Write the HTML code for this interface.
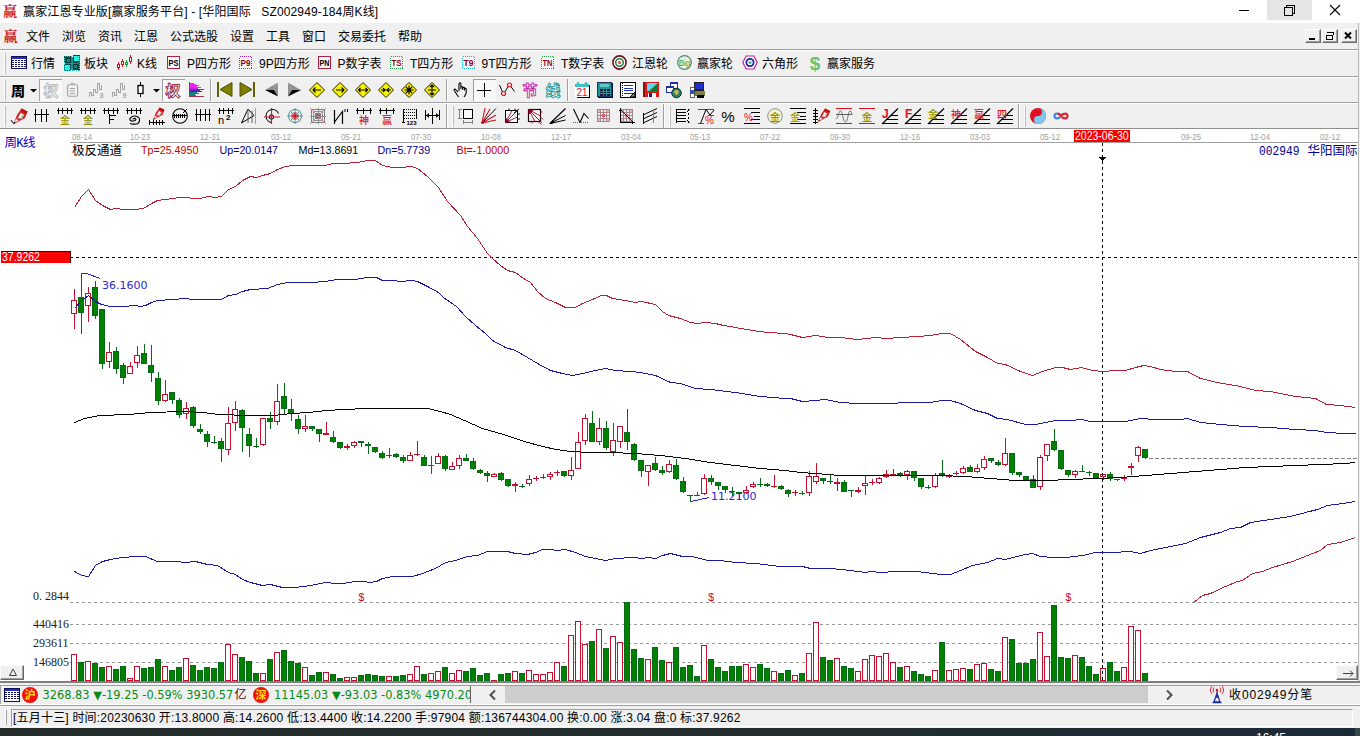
<!DOCTYPE html>
<html lang="zh"><head><meta charset="utf-8"><title>赢家江恩专业版</title>
<style>
html,body{margin:0;padding:0}
body{width:1360px;height:736px;position:relative;overflow:hidden;background:#f0f0f0;font-family:"Liberation Sans","Noto Sans CJK SC",sans-serif}
.t{position:absolute;white-space:nowrap}
.b{position:absolute}
svg{position:absolute;overflow:visible}
.ic{position:absolute}
</style></head><body>

<div class="b" style="left:0px;top:0px;width:1360px;height:23px;background:#fff;"></div>
<div class="b" style="left:1267px;top:0px;width:45px;height:20px;background:#e5e5e5;"></div>
<div class="t" style="left:3px;top:3px;font:700 14px/18px 'Liberation Serif','Noto Serif CJK SC',serif;color:#cc1020">赢</div>
<div class="t" style="left:23px;top:2.5px;font:400 12px/18px 'Liberation Sans','Noto Sans CJK SC',sans-serif;color:#000;letter-spacing:0.14px;">赢家江恩专业版[赢家服务平台] - [华阳国际&nbsp;&nbsp;&nbsp;SZ002949-184周K线]</div>
<svg style="left:1230px;top:0" width="130" height="23" shape-rendering="crispEdges"><path d="M9 10.5h10" stroke="#000" fill="none"/><path d="M54.5 7.5h8v8h-8z M56.500 7.5v-2h8v8h-2" stroke="#000" fill="none"/><path d="M100 5l10 10M110 5l-10 10" stroke="#000" fill="none" shape-rendering="geometricPrecision" stroke-width="1.1"/></svg>
<div class="b" style="left:0px;top:23px;width:1360px;height:26px;background:#f0f0f0;"></div>
<div class="t" style="left:3.5px;top:27.5px;font:700 14px/18px 'Liberation Serif','Noto Serif CJK SC',serif;color:#cc1020">赢</div>
<div class="t" style="left:26px;top:27.5px;font:400 12px/18px 'Liberation Sans','Noto Sans CJK SC',sans-serif;color:#000;">文件</div>
<div class="t" style="left:62px;top:27.5px;font:400 12px/18px 'Liberation Sans','Noto Sans CJK SC',sans-serif;color:#000;">浏览</div>
<div class="t" style="left:98px;top:27.5px;font:400 12px/18px 'Liberation Sans','Noto Sans CJK SC',sans-serif;color:#000;">资讯</div>
<div class="t" style="left:134px;top:27.5px;font:400 12px/18px 'Liberation Sans','Noto Sans CJK SC',sans-serif;color:#000;">江恩</div>
<div class="t" style="left:170px;top:27.5px;font:400 12px/18px 'Liberation Sans','Noto Sans CJK SC',sans-serif;color:#000;">公式选股</div>
<div class="t" style="left:230px;top:27.5px;font:400 12px/18px 'Liberation Sans','Noto Sans CJK SC',sans-serif;color:#000;">设置</div>
<div class="t" style="left:266px;top:27.5px;font:400 12px/18px 'Liberation Sans','Noto Sans CJK SC',sans-serif;color:#000;">工具</div>
<div class="t" style="left:302px;top:27.5px;font:400 12px/18px 'Liberation Sans','Noto Sans CJK SC',sans-serif;color:#000;">窗口</div>
<div class="t" style="left:338px;top:27.5px;font:400 12px/18px 'Liberation Sans','Noto Sans CJK SC',sans-serif;color:#000;">交易委托</div>
<div class="t" style="left:398px;top:27.5px;font:400 12px/18px 'Liberation Sans','Noto Sans CJK SC',sans-serif;color:#000;">帮助</div>
<div class="b" style="left:1305px;top:29px;width:14px;height:12px;background:#f0f0f0;border:1px solid;border-color:#fff #696969 #696969 #fff;box-shadow:inset -1px -1px 0 #a0a0a0"></div>
<div class="b" style="left:1322px;top:29px;width:14px;height:12px;background:#f0f0f0;border:1px solid;border-color:#fff #696969 #696969 #fff;box-shadow:inset -1px -1px 0 #a0a0a0"></div>
<div class="b" style="left:1341px;top:29px;width:14px;height:12px;background:#f0f0f0;border:1px solid;border-color:#fff #696969 #696969 #fff;box-shadow:inset -1px -1px 0 #a0a0a0"></div>
<svg style="left:1305px;top:29px" width="54" height="14" shape-rendering="crispEdges"><rect x="4" y="9" width="6" height="2" fill="#000"/><path d="M23.5 3h5v3M22 3.500h7M21.500 6.500h6v4h-6z M21 6.500h7" stroke="#000" fill="none"/><path d="M40 3.500l6 6M46 3.500l-6 6" stroke="#000" stroke-width="2" fill="none" shape-rendering="geometricPrecision"/></svg>
<div class="b" style="left:0px;top:49px;width:1359px;height:1px;background:#a0a0a0;"></div>
<div class="b" style="left:0px;top:50px;width:1359px;height:1px;background:#fff;"></div>
<div class="b" style="left:0px;top:76px;width:1359px;height:1px;background:#a0a0a0;"></div>
<div class="b" style="left:0px;top:77px;width:1359px;height:1px;background:#fff;"></div>
<div class="b" style="left:0px;top:102px;width:1359px;height:1px;background:#a0a0a0;"></div>
<div class="b" style="left:0px;top:103px;width:1359px;height:1px;background:#fff;"></div>
<div class="b" style="left:0px;top:128px;width:1359px;height:1px;background:#909090;"></div>
<div class="b" style="left:1358px;top:23px;width:1px;height:660px;background:#b8b8b8;"></div>
<div class="b" style="left:4px;top:53px;width:1px;height:21px;background:#fff;"></div>
<div class="b" style="left:5px;top:53px;width:1px;height:21px;background:#bcbcbc;"></div>
<svg style="left:11px;top:56px" width="18" height="18" viewBox="0 0 18 18" shape-rendering="crispEdges"><rect x="0.5" y="0.5" width="15" height="12" fill="#fff" stroke="#101050"/><rect x="1" y="1" width="14" height="2" fill="#2030c0"/><path d="M1 4.5h14" stroke="#101050"/><path d="M1 6.5h14" stroke="#101050"/><path d="M1 8.5h14" stroke="#101050"/><path d="M1 10.5h14" stroke="#101050"/><path d="M3.5 3v9" stroke="#fff"/><path d="M6.5 3v9" stroke="#fff"/><path d="M9.5 3v9" stroke="#fff"/><path d="M12.5 3v9" stroke="#fff"/></svg>
<div class="t" style="left:31px;top:54.5px;font:400 12px/18px 'Liberation Sans','Noto Sans CJK SC',sans-serif;color:#000;">行情</div>
<svg style="left:64px;top:55px" width="18" height="18" viewBox="0 0 18 18" shape-rendering="crispEdges"><path d="M0 1h8v1h1V0h7v7h-1v1h1v7H8v-1H7v2H0V9h1V8H0z" fill="#0a4a4a"/><rect x="0.500" y="1.500" width="15" height="14" fill="none" stroke="#20c8c0" stroke-dasharray="1 1"/><rect x="7" y="2" width="2" height="13" fill="#18b0a8" opacity=".7"/><rect x="1" y="8" width="14" height="1" fill="#18b0a8" opacity=".7"/><rect x="2.500" y="3.500" width="4" height="4" fill="#108888" stroke="#063838"/><rect x="10" y="1" width="5" height="5" fill="#28f0e0"/><rect x="1" y="10" width="5" height="5" fill="#28f0e0"/><rect x="9.500" y="9.500" width="4" height="4" fill="#108888" stroke="#063838"/></svg>
<div class="t" style="left:84px;top:54.5px;font:400 12px/18px 'Liberation Sans','Noto Sans CJK SC',sans-serif;color:#000;">板块</div>
<svg style="left:116px;top:56px" width="18" height="18" viewBox="0 0 18 18" shape-rendering="crispEdges"><rect x="2" y="6" width="1" height="8" fill="#e01020"/><rect x="1.5" y="8.5" width="2" height="3" fill="#fff" stroke="#e01020"/><rect x="6" y="3" width="1" height="8" fill="#e01020"/><rect x="5.5" y="5.5" width="2" height="3" fill="#fff" stroke="#e01020"/><rect x="10" y="4" width="1" height="7" fill="#10a030"/><rect x="9.5" y="6.5" width="2" height="2" fill="#fff" stroke="#10a030"/><rect x="14" y="-1" width="1" height="9" fill="#e01020"/><rect x="13.5" y="1.5" width="2" height="4" fill="#fff" stroke="#e01020"/></svg>
<div class="t" style="left:137px;top:54.5px;font:400 12px/18px 'Liberation Sans','Noto Sans CJK SC',sans-serif;color:#000;">K线</div>
<svg style="left:167px;top:56px" width="18" height="18" viewBox="0 0 18 18" shape-rendering="crispEdges"><rect x="0.5" y="0.5" width="12" height="12" fill="#f8f8f8" stroke="#b02040"/><text x="6.500" y="10" font-family="'Liberation Sans',sans-serif" font-size="8.500" font-weight="700" fill="#000" text-anchor="middle" shape-rendering="auto" textLength="10" lengthAdjust="spacingAndGlyphs">PS</text></svg>
<div class="t" style="left:187px;top:54.5px;font:400 12px/18px 'Liberation Sans','Noto Sans CJK SC',sans-serif;color:#000;">P四方形</div>
<svg style="left:239px;top:56px" width="18" height="18" viewBox="0 0 18 18" shape-rendering="crispEdges"><rect x="0.5" y="0.5" width="12" height="12" fill="#f8f8f8" stroke="#a020c0" stroke-dasharray="1 1"/><text x="6.500" y="10" font-family="'Liberation Sans',sans-serif" font-size="8.500" font-weight="700" fill="#900010" text-anchor="middle" shape-rendering="auto" textLength="10" lengthAdjust="spacingAndGlyphs">P9</text></svg>
<div class="t" style="left:259px;top:54.5px;font:400 12px/18px 'Liberation Sans','Noto Sans CJK SC',sans-serif;color:#000;">9P四方形</div>
<svg style="left:318px;top:56px" width="18" height="18" viewBox="0 0 18 18" shape-rendering="crispEdges"><rect x="0.5" y="0.5" width="12" height="12" fill="#f8f8f8" stroke="#b02040"/><text x="6.500" y="10" font-family="'Liberation Sans',sans-serif" font-size="8.500" font-weight="700" fill="#000" text-anchor="middle" shape-rendering="auto" textLength="10" lengthAdjust="spacingAndGlyphs">PN</text></svg>
<div class="t" style="left:337.5px;top:54.5px;font:400 12px/18px 'Liberation Sans','Noto Sans CJK SC',sans-serif;color:#000;">P数字表</div>
<svg style="left:390px;top:56px" width="18" height="18" viewBox="0 0 18 18" shape-rendering="crispEdges"><rect x="0.5" y="0.5" width="12" height="12" fill="#f8f8f8" stroke="#20a040" stroke-dasharray="1 1"/><text x="6.500" y="10" font-family="'Liberation Sans',sans-serif" font-size="8.500" font-weight="700" fill="#900010" text-anchor="middle" shape-rendering="auto" textLength="10" lengthAdjust="spacingAndGlyphs">TS</text></svg>
<div class="t" style="left:410px;top:54.5px;font:400 12px/18px 'Liberation Sans','Noto Sans CJK SC',sans-serif;color:#000;">T四方形</div>
<svg style="left:462px;top:56px" width="18" height="18" viewBox="0 0 18 18" shape-rendering="crispEdges"><rect x="0.5" y="0.5" width="12" height="12" fill="#f8f8f8" stroke="#20c0c0" stroke-dasharray="1 1"/><text x="6.500" y="10" font-family="'Liberation Sans',sans-serif" font-size="8.500" font-weight="700" fill="#900010" text-anchor="middle" shape-rendering="auto" textLength="10" lengthAdjust="spacingAndGlyphs">T9</text></svg>
<div class="t" style="left:481.5px;top:54.5px;font:400 12px/18px 'Liberation Sans','Noto Sans CJK SC',sans-serif;color:#000;">9T四方形</div>
<svg style="left:541px;top:56px" width="18" height="18" viewBox="0 0 18 18" shape-rendering="crispEdges"><rect x="0.5" y="0.5" width="12" height="12" fill="#f8f8f8" stroke="#20a040" stroke-dasharray="1 1"/><text x="6.500" y="10" font-family="'Liberation Sans',sans-serif" font-size="8.500" font-weight="700" fill="#900010" text-anchor="middle" shape-rendering="auto" textLength="10" lengthAdjust="spacingAndGlyphs">TN</text></svg>
<div class="t" style="left:561px;top:54.5px;font:400 12px/18px 'Liberation Sans','Noto Sans CJK SC',sans-serif;color:#000;">T数字表</div>
<svg style="left:612px;top:55px" width="18" height="18" viewBox="0 0 18 18" shape-rendering="crispEdges"><g shape-rendering="geometricPrecision"><circle cx="7.500" cy="7.500" r="6.600" fill="#fff" stroke="#701020" stroke-width="1.6"/><circle cx="7.500" cy="7.500" r="3.800" fill="#fff" stroke="#208040" stroke-width="1.500"/><circle cx="7.500" cy="7.500" r="1.500" fill="#e04040"/></g></svg>
<div class="t" style="left:632px;top:54.5px;font:400 12px/18px 'Liberation Sans','Noto Sans CJK SC',sans-serif;color:#000;">江恩轮</div>
<svg style="left:677px;top:55px" width="18" height="18" viewBox="0 0 18 18" shape-rendering="crispEdges"><g shape-rendering="geometricPrecision"><circle cx="7.500" cy="7.500" r="6.800" fill="#e8f4e8" stroke="#508878" stroke-width="1.2"/><text x="7.500" y="10.500" font-family="'Liberation Sans',sans-serif" font-size="9.500" font-weight="400" fill="#30a030" text-anchor="middle" textLength="11.500" lengthAdjust="spacingAndGlyphs">Big</text></g></svg>
<div class="t" style="left:697px;top:54.5px;font:400 12px/18px 'Liberation Sans','Noto Sans CJK SC',sans-serif;color:#000;">赢家轮</div>
<svg style="left:742px;top:55px" width="18" height="18" viewBox="0 0 18 18" shape-rendering="crispEdges"><g shape-rendering="geometricPrecision"><path d="M0.800 7.500L4.200 1h7.600L15.200 7.500 11.800 14H4.200z" fill="#fff" stroke="#c020a0" stroke-width="1.2"/><circle cx="8" cy="7.500" r="3.600" fill="#fff" stroke="#2020a0" stroke-width="1.800"/><circle cx="8" cy="7.500" r="1.600" fill="#40c080"/></g></svg>
<div class="t" style="left:762px;top:54.5px;font:400 12px/18px 'Liberation Sans','Noto Sans CJK SC',sans-serif;color:#000;">六角形</div>
<svg style="left:807px;top:55px" width="18" height="18" viewBox="0 0 18 18" shape-rendering="crispEdges"><text x="8" y="15" font-family="'Liberation Sans',sans-serif" font-size="19" font-weight="700" fill="#6cc06c" text-anchor="middle" shape-rendering="auto">$</text></svg>
<div class="t" style="left:827px;top:54.5px;font:400 12px/18px 'Liberation Sans','Noto Sans CJK SC',sans-serif;color:#000;">赢家服务</div>
<div class="b" style="left:4px;top:80px;width:1px;height:21px;background:#fff;"></div>
<div class="b" style="left:5px;top:80px;width:1px;height:21px;background:#bcbcbc;"></div>
<svg style="left:11px;top:83px" width="16" height="16" viewBox="0 0 16 16" shape-rendering="crispEdges"><text x="7" y="12.500" font-family="'Liberation Sans','Noto Sans CJK SC',sans-serif" font-size="14" font-weight="900" fill="#000" text-anchor="middle" shape-rendering="auto">周</text></svg>
<svg style="left:30px;top:89px" width="8" height="5" viewBox="0 0 8 5" shape-rendering="crispEdges"><path d="M0 0h7L3.500 3.500z" fill="#000" shape-rendering="geometricPrecision"/></svg>
<div class="b" style="left:39px;top:79px;width:23px;height:22px;background:#f8f8f8;border-left:1px solid #a0a0a0;border-top:1px solid #a0a0a0;box-sizing:border-box"></div>
<svg style="left:43px;top:82px" width="16" height="16" viewBox="0 0 16 16" shape-rendering="crispEdges"><text x="8" y="13.500" font-family="'Liberation Sans','Noto Sans CJK SC',sans-serif" font-size="15" font-weight="700" fill="#fbfbfb" stroke="#b0b0b0" stroke-width="0.8" text-anchor="middle" shape-rendering="auto">权</text></svg>
<svg style="left:67px;top:83px" width="12" height="15" viewBox="0 0 12 15" shape-rendering="crispEdges"><g shape-rendering="geometricPrecision" fill="none" stroke="#a4a4a4" stroke-width="1.100"><rect x="0.600" y="1.800" width="10" height="11.500" rx="1.500"/><path d="M3.500 1.500c0-1.300 4-1.300 4 0" /><path d="M3 5.500h5M3 8h5M3 10.500h5"/></g></svg>
<svg style="left:88px;top:82px" width="17" height="17" viewBox="0 0 17 17" shape-rendering="crispEdges"><path d="M1.500 15V10.500H3.500V13.500H5.500V7.500H7.500V10.500H9.500V1.500H11.500V7.500H13.500V3" fill="none" stroke="#a4a4a4" shape-rendering="crispEdges"/><text x="13.500" y="16" font-family="'Liberation Sans',sans-serif" font-size="7" font-weight="700" fill="#a4a4a4" text-anchor="middle" shape-rendering="auto">3</text></svg>
<svg style="left:111px;top:82px" width="17" height="17" viewBox="0 0 17 17" shape-rendering="crispEdges"><path d="M1.500 15V10.500H3.500V13.500H5.500V7.500H7.500V10.500H9.500V1.500H11.500V7.500H13.500V3" fill="none" stroke="#a4a4a4" shape-rendering="crispEdges"/><text x="13.500" y="16" font-family="'Liberation Sans',sans-serif" font-size="7" font-weight="700" fill="#a4a4a4" text-anchor="middle" shape-rendering="auto">9</text></svg>
<svg style="left:137px;top:82px" width="8" height="16" viewBox="0 0 8 16" shape-rendering="crispEdges"><rect x="3" y="0" width="1" height="15" fill="#000"/><rect x="1" y="3.500" width="5" height="8" fill="#fff" stroke="#000" stroke-width="1.300" shape-rendering="geometricPrecision"/></svg>
<svg style="left:153px;top:89px" width="8" height="5" viewBox="0 0 8 5" shape-rendering="crispEdges"><path d="M0 0h7L3.500 3.500z" fill="#000" shape-rendering="geometricPrecision"/></svg>
<div class="b" style="left:162px;top:79px;width:23px;height:22px;background:#f8f8f8;border-left:1px solid #a0a0a0;border-top:1px solid #a0a0a0;box-sizing:border-box"></div>
<svg style="left:165px;top:82px" width="16" height="16" viewBox="0 0 16 16" shape-rendering="crispEdges"><text x="8" y="13.500" font-family="'Liberation Sans','Noto Sans CJK SC',sans-serif" font-size="15" font-weight="700" fill="#fbfbfb" stroke="#901020" stroke-width="0.8" text-anchor="middle" shape-rendering="auto">权</text></svg>
<svg style="left:188px;top:82px" width="17" height="16" viewBox="0 0 17 16" shape-rendering="crispEdges"><path d="M1.500 0v14.500h14" fill="none" stroke="#a03050" stroke-width="1"/><rect x="2" y="0.5" width="4" height="1" fill="#f020f0"/><rect x="2" y="1.5" width="6" height="1" fill="#f020f0"/><rect x="2" y="2.5" width="9" height="1" fill="#f020f0"/><rect x="2" y="3.5" width="7" height="1" fill="#f020f0"/><rect x="2" y="4.5" width="11" height="1" fill="#f020f0"/><rect x="2" y="5.5" width="8" height="1" fill="#d020e0"/><rect x="2" y="6.5" width="14" height="1" fill="#9020c0"/><rect x="2" y="7.5" width="10" height="1" fill="#6020b0"/><rect x="2" y="8.5" width="12" height="1" fill="#204090"/><rect x="2" y="9.5" width="7" height="1" fill="#108080"/><rect x="2" y="10.5" width="9" height="1" fill="#108080"/><rect x="2" y="11.5" width="5" height="1" fill="#108080"/><rect x="2" y="12.5" width="6" height="1" fill="#108080"/></svg>
<div class="b" style="left:210px;top:79px;width:1px;height:22px;background:#a0a0a0;"></div>
<div class="b" style="left:211px;top:79px;width:1px;height:22px;background:#fff;"></div>
<svg style="left:217px;top:82px" width="16" height="16" viewBox="0 0 16 16" shape-rendering="crispEdges"><rect x="0" y="0" width="2" height="15" fill="#606000"/><path d="M15 0.500L3 7.500 15 14.500z" fill="#808000" stroke="#505000" shape-rendering="geometricPrecision"/></svg>
<svg style="left:240px;top:82px" width="16" height="16" viewBox="0 0 16 16" shape-rendering="crispEdges"><rect x="13" y="0" width="2" height="15" fill="#606000"/><path d="M0 0.500L12 7.500 0 14.500z" fill="#808000" stroke="#505000" shape-rendering="geometricPrecision"/></svg>
<svg style="left:264px;top:82px" width="16" height="16" viewBox="0 0 16 16" shape-rendering="crispEdges"><g shape-rendering="geometricPrecision"><path d="M14 0.500L1 8 14 8z" fill="#f4f4f4"/><path d="M14 0.500L1 8h9z" fill="#909090"/><path d="M14 0.500v14l-4-6.500z" fill="#909090"/><path d="M1 8l13 6.500L10 8z" fill="#000"/></g></svg>
<svg style="left:287px;top:82px" width="16" height="16" viewBox="0 0 16 16" shape-rendering="crispEdges"><g shape-rendering="geometricPrecision"><path d="M1 0.500L14 8H5z" fill="#909090"/><path d="M1 0.500v14l4-6.500z" fill="#909090"/><path d="M14 8L1 14.500 5 8z" fill="#000"/></g></svg>
<svg style="left:308.5px;top:81.5px" width="16" height="16" viewBox="0 0 16 16" shape-rendering="crispEdges"><g shape-rendering="geometricPrecision"><path d="M8 0.500L15.500 8 8 15.500 0.500 8z" fill="#f6f200" stroke="#282000" stroke-width="1"/><path d="M12 8H4M6.500 5.500L4 8l2.500 2.500" stroke="#000" stroke-width="1.100" fill="none"/></g></svg>
<svg style="left:331.5px;top:81.5px" width="16" height="16" viewBox="0 0 16 16" shape-rendering="crispEdges"><g shape-rendering="geometricPrecision"><path d="M8 0.500L15.500 8 8 15.500 0.500 8z" fill="#f6f200" stroke="#282000" stroke-width="1"/><path d="M4 8h8M9.500 5.500L12 8 9.500 10.500" stroke="#000" stroke-width="1.100" fill="none"/></g></svg>
<svg style="left:354.5px;top:81.5px" width="16" height="16" viewBox="0 0 16 16" shape-rendering="crispEdges"><g shape-rendering="geometricPrecision"><path d="M8 0.500L15.500 8 8 15.500 0.500 8z" fill="#f6f200" stroke="#282000" stroke-width="1"/><path d="M3.500 8h9M5.500 6L3.500 8l2 2M10.500 6l2 2-2 2" stroke="#000" stroke-width="1.100" fill="none"/></g></svg>
<svg style="left:377.5px;top:81.5px" width="16" height="16" viewBox="0 0 16 16" shape-rendering="crispEdges"><g shape-rendering="geometricPrecision"><path d="M8 0.500L15.500 8 8 15.500 0.500 8z" fill="#f6f200" stroke="#282000" stroke-width="1"/><path d="M3 8h10M5 6l2 2-2 2M11 6L9 8l2 2" stroke="#000" stroke-width="1.100" fill="none"/></g></svg>
<svg style="left:400.5px;top:81.5px" width="16" height="16" viewBox="0 0 16 16" shape-rendering="crispEdges"><g shape-rendering="geometricPrecision"><path d="M8 0.500L15.500 8 8 15.500 0.500 8z" fill="#f6f200" stroke="#282000" stroke-width="1"/><path d="M3.500 8h9M8 3.500v9M5 5l6 6M11 5l-6 6" stroke="#000" stroke-width="1.100" fill="none"/></g></svg>
<svg style="left:423.5px;top:81.5px" width="16" height="16" viewBox="0 0 16 16" shape-rendering="crispEdges"><g shape-rendering="geometricPrecision"><path d="M8 0.500L15.500 8 8 15.500 0.500 8z" fill="#f6f200" stroke="#282000" stroke-width="1"/><path d="M4 8h8M8 3v10M6 5l2-2 2 2M6 11l2 2 2-2" stroke="#000" stroke-width="1.100" fill="none"/></g></svg>
<div class="b" style="left:446px;top:79px;width:1px;height:22px;background:#a0a0a0;"></div>
<div class="b" style="left:447px;top:79px;width:1px;height:22px;background:#fff;"></div>
<svg style="left:453px;top:82px" width="16" height="16" viewBox="0 0 16 16" shape-rendering="crispEdges"><g shape-rendering="geometricPrecision" fill="none" stroke="#000" stroke-width="1.100" stroke-linejoin="round"><path d="M5.500 15L1.200 8.500c-.6-1 .6-1.800 1.400-1l2.400 2.600M6 9V1.800c0-1.400 1.900-1.400 1.900 0V7M7.900 5.500c0-1.300 1.800-1.300 1.800 0V8M9.700 6.300c0-1.200 1.800-1.200 1.800 0V8.500M11.500 7.200c0-1.100 1.700-1.100 1.700 0v3.300c0 1.800-1.200 3-2.200 4.500"/></g></svg>
<div class="b" style="left:473px;top:79px;width:23px;height:22px;background:#f8f8f8;border-left:1px solid #a0a0a0;border-top:1px solid #a0a0a0;box-sizing:border-box"></div>
<svg style="left:477px;top:83px" width="15" height="15" viewBox="0 0 15 15" shape-rendering="crispEdges"><path d="M7.500 0v14M0 7.500h14" stroke="#000" stroke-width="1" fill="none"/></svg>
<svg style="left:499px;top:82px" width="16" height="16" viewBox="0 0 16 16" shape-rendering="crispEdges"><g shape-rendering="geometricPrecision" fill="none"><path d="M0.500 3l4 9 6-9.500 5 7" stroke="#000" stroke-width="1"/><circle cx="4.500" cy="11.500" r="2" stroke="#e01020" stroke-width="1.200" fill="#f0f0f0"/><circle cx="10.500" cy="3" r="2" stroke="#e01020" stroke-width="1.200" fill="#f0f0f0"/></g></svg>
<svg style="left:522px;top:82px" width="16" height="16" viewBox="0 0 16 16" shape-rendering="crispEdges"><text x="8" y="13.500" font-family="'Liberation Sans','Noto Sans CJK SC',sans-serif" font-size="15" font-weight="700" fill="#fbfbfb" stroke="#c010a0" stroke-width="0.8" text-anchor="middle" shape-rendering="auto">节</text></svg>
<svg style="left:545px;top:82px" width="16" height="16" viewBox="0 0 16 16" shape-rendering="crispEdges"><text x="8" y="13.500" font-family="'Liberation Sans','Noto Sans CJK SC',sans-serif" font-size="15" font-weight="700" fill="#fbfbfb" stroke="#109090" stroke-width="0.8" text-anchor="middle" shape-rendering="auto">线</text></svg>
<div class="b" style="left:567px;top:79px;width:1px;height:22px;background:#a0a0a0;"></div>
<div class="b" style="left:568px;top:79px;width:1px;height:22px;background:#fff;"></div>
<svg style="left:575px;top:82px" width="16" height="16" viewBox="0 0 16 16" shape-rendering="crispEdges"><rect x="2" y="3" width="13" height="13" fill="#000"/><rect x="0" y="2" width="14" height="13" fill="#fff"/><rect x="0" y="2" width="14" height="3" fill="#40c0c0"/><path d="M1.500 2.500L3 0l1.500 2.500M9.500 2.500L11 0l1.500 2.500" fill="#40c0c0" stroke="#40c0c0" shape-rendering="geometricPrecision"/><text x="7" y="14" font-family="'Liberation Sans',sans-serif" font-size="10.500" font-weight="400" fill="#e01030" text-anchor="middle" shape-rendering="auto" textLength="11" lengthAdjust="spacingAndGlyphs">21</text></svg>
<svg style="left:597px;top:82px" width="16" height="16" viewBox="0 0 16 16" shape-rendering="crispEdges"><rect x="1" y="1" width="15" height="15" fill="#001040"/><rect x="0" y="0" width="15" height="15" fill="#189898"/><rect x="0.500" y="0.500" width="14" height="14" fill="none" stroke="#203060"/><rect x="3" y="2" width="9" height="3" fill="#60c8c8"/><rect x="3" y="7" width="2.500" height="1.500" fill="#102040"/><rect x="6.5" y="7" width="2.500" height="1.500" fill="#102040"/><rect x="10" y="7" width="2.500" height="1.500" fill="#102040"/><rect x="3" y="9.5" width="2.500" height="1.500" fill="#102040"/><rect x="6.5" y="9.5" width="2.500" height="1.500" fill="#102040"/><rect x="10" y="9.5" width="2.500" height="1.500" fill="#102040"/><rect x="3" y="12" width="2.500" height="1.500" fill="#102040"/><rect x="6.5" y="12" width="2.500" height="1.500" fill="#102040"/><rect x="10" y="12" width="2.500" height="1.500" fill="#102040"/></svg>
<svg style="left:620px;top:82px" width="16" height="16" viewBox="0 0 16 16" shape-rendering="crispEdges"><rect x="0.500" y="0.500" width="15" height="15" fill="#fff" stroke="#000" stroke-width="1.500"/><path d="M4 3.5h9" stroke="#2030a0"/><path d="M4 6h9" stroke="#2030a0"/><path d="M4 8.5h9" stroke="#2030a0"/><path d="M4 11h9" stroke="#2030a0"/><path d="M2 1v14" stroke="#000" stroke-dasharray="1 1"/><path d="M10 15l5-5v5z" fill="#808080" stroke="#000" shape-rendering="geometricPrecision"/></svg>
<svg style="left:643px;top:82px" width="16" height="16" viewBox="0 0 16 16" shape-rendering="crispEdges"><rect x="0" y="0" width="16" height="15" fill="#e01818"/><rect x="0" y="0" width="2" height="15" fill="#901010"/><rect x="4" y="1" width="11" height="8" fill="#60d8e8"/><path d="M15 1v8H6z" fill="#187838" shape-rendering="geometricPrecision"/><rect x="5" y="11" width="8" height="4" fill="#fff"/><rect x="6" y="11" width="3" height="4" fill="#202080"/></svg>
<svg style="left:666px;top:82px" width="16" height="16" viewBox="0 0 16 16" shape-rendering="crispEdges"><rect x="4" y="0" width="8" height="7" fill="#2030a0"/><rect x="5" y="2" width="6" height="4" fill="#fff"/><rect x="0" y="4" width="8" height="7" fill="#2030a0"/><rect x="1" y="6" width="6" height="4" fill="#fff"/><g shape-rendering="geometricPrecision"><circle cx="10.500" cy="11" r="4.800" fill="#308070" stroke="#103030"/><path d="M8 9l3-1 2 2-2 3-2-1z" fill="#d0c040"/></g></svg>
<svg style="left:689px;top:82px" width="16" height="16" viewBox="0 0 16 16" shape-rendering="crispEdges"><rect x="5" y="0" width="10" height="9" fill="#202020"/><rect x="6" y="1" width="8" height="6" fill="#2030d0"/><rect x="4" y="9" width="12" height="5" fill="#808040"/><rect x="8" y="13" width="7" height="3" fill="#000"/><rect x="1" y="5" width="4" height="10" fill="#fff" stroke="#404040" stroke-width=".8"/><rect x="1" y="8" width="4" height="4" fill="#3050c0"/></svg>
<div class="b" style="left:4px;top:106px;width:1px;height:21px;background:#fff;"></div>
<div class="b" style="left:5px;top:106px;width:1px;height:21px;background:#bcbcbc;"></div>
<svg style="left:11px;top:108px" width="16" height="17" viewBox="0 0 16 17" shape-rendering="crispEdges"><g transform="translate(1,0) scale(1)" shape-rendering="geometricPrecision"><path d="M1.500 16L5 7 9.500 0.500 15.500 3.500 13 10 6.500 13.500z" fill="#e01818"/><path d="M5.500 10.500L8.500 4.500 12.500 6.500 10 11z" fill="#b8b8b8"/><path d="M6.500 9.500L9 5.500 10.500 6.200 8.500 10z" fill="#fff"/><path d="M1.500 16L4 10.500 7 12.500z" fill="#f4f4f4" stroke="#e01818" stroke-width=".5"/><path d="M1.500 16l.9-2.200 1.300.9z" fill="#000"/><path d="M9.500 0.500L15.500 3.500 14.500 6 8.500 2.500z" fill="#c01010"/></g><path d="M0 12l2.500 3.500" stroke="#000" fill="none" shape-rendering="geometricPrecision"/></svg>
<svg style="left:34px;top:108px" width="16" height="17" viewBox="0 0 16 17" shape-rendering="crispEdges"><path d="M1.500 1v13M7.500 1v13M12.500 1v13M0 6.500h15" stroke="#000" fill="none"/></svg>
<svg style="left:57px;top:108px" width="16" height="17" viewBox="0 0 16 17" shape-rendering="crispEdges"><path d="M0 2.5h16" stroke="#000" fill="none"/><path d="M1.5 0v6" stroke="#000" fill="none"/><path d="M5.5 0v6" stroke="#000" fill="none"/><path d="M10.5 0v6" stroke="#000" fill="none"/><path d="M14.5 0v6" stroke="#000" fill="none"/><text x="8" y="15.500" font-family="'Liberation Sans','Noto Sans CJK SC',sans-serif" font-size="10" font-weight="500" fill="#909000" text-anchor="middle" shape-rendering="auto">金</text></svg>
<svg style="left:80px;top:108px" width="16" height="17" viewBox="0 0 16 17" shape-rendering="crispEdges"><path d="M0 2.5h16" stroke="#000" fill="none"/><path d="M1.5 0v6" stroke="#000" fill="none"/><path d="M5.5 0v6" stroke="#000" fill="none"/><path d="M10.5 0v6" stroke="#000" fill="none"/><path d="M14.5 0v6" stroke="#000" fill="none"/><text x="8" y="15.500" font-family="'Liberation Sans','Noto Sans CJK SC',sans-serif" font-size="10" font-weight="500" fill="#909000" text-anchor="middle" shape-rendering="auto">金</text></svg>
<svg style="left:103px;top:108px" width="16" height="17" viewBox="0 0 16 17" shape-rendering="crispEdges"><path d="M0 2.5h16" stroke="#000" fill="none"/><path d="M1.5 0v6" stroke="#000" fill="none"/><path d="M5.5 0v6" stroke="#000" fill="none"/><path d="M10.5 0v6" stroke="#000" fill="none"/><path d="M14.5 0v6" stroke="#000" fill="none"/><path d="M6.500 6v10M6.500 7.500h6M6.500 11.500h4" stroke="#000" fill="none" stroke-width="1.300"/></svg>
<svg style="left:126px;top:108px" width="16" height="17" viewBox="0 0 16 17" shape-rendering="crispEdges"><path d="M0 2.5h16" stroke="#000" fill="none"/><path d="M1.5 0v6" stroke="#000" fill="none"/><path d="M5.5 0v6" stroke="#000" fill="none"/><path d="M10.5 0v6" stroke="#000" fill="none"/><path d="M14.5 0v6" stroke="#000" fill="none"/><path d="M7 11.500c0-1.500 3-1.500 3 0s-5 2.500-6 .5 3-5 7-3.500 3 7-1 7.500-5 0-6-.500" fill="none" stroke="#000" shape-rendering="geometricPrecision" stroke-width="1.100"/></svg>
<svg style="left:149px;top:108px" width="16" height="17" viewBox="0 0 16 17" shape-rendering="crispEdges"><g transform="translate(3,-1) scale(0.8)" shape-rendering="geometricPrecision"><path d="M1.500 16L5 7 9.500 0.500 15.500 3.500 13 10 6.500 13.500z" fill="#e01818"/><path d="M5.500 10.500L8.500 4.500 12.500 6.500 10 11z" fill="#b8b8b8"/><path d="M6.500 9.500L9 5.500 10.500 6.200 8.500 10z" fill="#fff"/><path d="M1.500 16L4 10.500 7 12.500z" fill="#f4f4f4" stroke="#e01818" stroke-width=".5"/><path d="M1.500 16l.9-2.200 1.300.9z" fill="#000"/><path d="M9.500 0.500L15.500 3.500 14.500 6 8.500 2.500z" fill="#c01010"/></g><path d="M0 14.500h16" stroke="#000" fill="none"/><path d="M0.5 12v5" stroke="#000" fill="none"/><path d="M4.5 12v5" stroke="#000" fill="none"/><path d="M7.5 12v5" stroke="#000" fill="none"/><path d="M10.5 12v5" stroke="#000" fill="none"/><path d="M13.5 12v5" stroke="#000" fill="none"/></svg>
<svg style="left:172px;top:108px" width="16" height="17" viewBox="0 0 16 17" shape-rendering="crispEdges"><circle cx="8" cy="8" r="7.300" fill="none" stroke="#000" shape-rendering="geometricPrecision" stroke-width="1.100"/><path d="M1 7.500h14" stroke="#000" fill="none"/><path d="M2.5 5.500v4" stroke="#000" fill="none"/><path d="M4.5 5.500v4" stroke="#000" fill="none"/><path d="M6.5 5.500v4" stroke="#000" fill="none"/><path d="M8.5 5.500v4" stroke="#000" fill="none"/><path d="M10.5 5.500v4" stroke="#000" fill="none"/><path d="M12.5 5.500v4" stroke="#000" fill="none"/><path d="M11 5l4-4" stroke="#000" fill="none" shape-rendering="geometricPrecision"/></svg>
<svg style="left:195px;top:108px" width="16" height="17" viewBox="0 0 16 17" shape-rendering="crispEdges"><path d="M1.500 1v12M5.500 1v12M10.500 1v12M14.500 1v12M0 6.500h16" stroke="#000" fill="none"/></svg>
<svg style="left:218px;top:108px" width="16" height="17" viewBox="0 0 16 17" shape-rendering="crispEdges"><path d="M0 2.5h16" stroke="#000" fill="none"/><path d="M1.5 0v6" stroke="#000" fill="none"/><path d="M5.5 0v6" stroke="#000" fill="none"/><path d="M10.5 0v6" stroke="#000" fill="none"/><path d="M14.5 0v6" stroke="#000" fill="none"/><text x="0" y="16" font-family="'Liberation Sans',sans-serif" font-size="11" fill="#000" shape-rendering="auto">n</text><text x="8" y="12" font-family="'Liberation Sans',sans-serif" font-size="8" fill="#000" font-weight="700" shape-rendering="auto">2</text></svg>
<svg style="left:241px;top:108px" width="16" height="17" viewBox="0 0 16 17" shape-rendering="crispEdges"><g shape-rendering="geometricPrecision" fill="none"><path d="M0.500 15L7 1l6 6.500z" stroke="#000"/><path d="M7 1v14M11 3v12" stroke="#606060"/><path d="M14.500 0v16" stroke="#a0a0a0"/></g></svg>
<svg style="left:264px;top:108px" width="16" height="17" viewBox="0 0 16 17" shape-rendering="crispEdges"><g shape-rendering="geometricPrecision" fill="none"><path d="M14.500 5.500A6.500 6.500 0 1 0 8 14.500" stroke="#000" stroke-width="1.100"/><circle cx="7.500" cy="9" r="2.200" stroke="#000"/><path d="M7.500 0v16M0 9h16" stroke="#e01020" stroke-width="1.100"/></g></svg>
<svg style="left:287px;top:108px" width="16" height="17" viewBox="0 0 16 17" shape-rendering="crispEdges"><g shape-rendering="geometricPrecision" fill="none"><circle cx="8" cy="8" r="6.500" stroke="#409090"/><circle cx="8" cy="8" r="3.500" stroke="#d05060"/><path d="M8 0v16M0 8h16M2.500 2.500l11 11M13.500 2.500l-11 11" stroke="#609090" stroke-width=".9"/><path d="M5 8h6M8 5v6" stroke="#e01020" stroke-width="1.500"/><circle cx="8" cy="8" r="1.500" fill="#e01020"/></g></svg>
<svg style="left:310px;top:108px" width="16" height="17" viewBox="0 0 16 17" shape-rendering="crispEdges"><g fill="none"><rect x="1.500" y="1.500" width="13" height="13" stroke="#808080"/><rect x="3.500" y="3.500" width="9" height="9" stroke="#909090"/><rect x="5.500" y="5.500" width="5" height="5" stroke="#a06070" fill="#a04050"/><path d="M8 0v16M0 8h16" stroke="#809090"/><path d="M0 0l16 16M16 0L0 16" stroke="#d07080" shape-rendering="geometricPrecision" stroke-width=".8"/></g></svg>
<svg style="left:333px;top:108px" width="16" height="17" viewBox="0 0 16 17" shape-rendering="crispEdges"><g shape-rendering="geometricPrecision" fill="none" stroke="#000"><path d="M1.500 2v14M1.500 14L9.500 3.500V16" stroke-width="1.200"/><path d="M12 1v3M14.500 1v3"/></g></svg>
<svg style="left:356px;top:108px" width="16" height="17" viewBox="0 0 16 17" shape-rendering="crispEdges"><path d="M0 2.5h16" stroke="#000" fill="none"/><path d="M1.5 0v6" stroke="#000" fill="none"/><path d="M7.5 0v6" stroke="#000" fill="none"/><path d="M14.5 0v6" stroke="#000" fill="none"/><text x="8" y="15.500" font-family="'Liberation Sans','Noto Sans CJK SC',sans-serif" font-size="10" font-weight="500" fill="#e01020" text-anchor="middle" shape-rendering="auto">神</text></svg>
<svg style="left:379px;top:108px" width="16" height="17" viewBox="0 0 16 17" shape-rendering="crispEdges"><path d="M0 2.5h16" stroke="#000" fill="none"/><path d="M1.5 0v6" stroke="#000" fill="none"/><path d="M7.5 0v6" stroke="#000" fill="none"/><path d="M14.5 0v6" stroke="#000" fill="none"/><text x="8" y="15.500" font-family="'Liberation Sans','Noto Sans CJK SC',sans-serif" font-size="10" font-weight="500" fill="#e01020" text-anchor="middle" shape-rendering="auto">赢</text></svg>
<svg style="left:402px;top:108px" width="16" height="17" viewBox="0 0 16 17" shape-rendering="crispEdges"><path d="M1.500 1v13M0 14.500h3" stroke="#000" fill="none"/><path d="M2 1.5h13" stroke="#000" stroke-dasharray="1 1" fill="none"/><path d="M2 4.5h13" stroke="#000" stroke-dasharray="1 1" fill="none"/><path d="M2 7.5h13" stroke="#000" stroke-dasharray="1 1" fill="none"/><path d="M2 10.5h13" stroke="#000" stroke-dasharray="1 1" fill="none"/><path d="M14.500 1v10" stroke="#000" fill="none"/><text x="9.500" y="16.500" font-family="'Liberation Sans',sans-serif" font-size="6" font-weight="700" fill="#000" text-anchor="middle" shape-rendering="auto">123</text></svg>
<svg style="left:425px;top:108px" width="16" height="17" viewBox="0 0 16 17" shape-rendering="crispEdges"><path d="M0.500 2v10M14.500 2v10M7.500 0v16M1 7.500h13" stroke="#000" fill="none"/><path d="M1 7.500l3-2.500v5zM14 7.500l-3-2.500v5z" fill="#000" shape-rendering="geometricPrecision"/></svg>
<div class="b" style="left:446px;top:104px;width:1px;height:24px;background:#a0a0a0;"></div>
<div class="b" style="left:447px;top:104px;width:1px;height:24px;background:#fff;"></div>
<div class="b" style="left:452px;top:106px;width:1px;height:21px;background:#fff;"></div>
<div class="b" style="left:453px;top:106px;width:1px;height:21px;background:#bcbcbc;"></div>
<svg style="left:458px;top:108px" width="16" height="17" viewBox="0 0 16 17" shape-rendering="crispEdges"><rect x="5.500" y="1.500" width="9" height="9" fill="#f8f8f8" stroke="#000" stroke-width="1"/><path d="M1.500 1v10M0 1.500h4M0 10.500h4M5.500 12v4M14.500 12v4M5 14.500h10" stroke="#808080" fill="none"/></svg>
<svg style="left:481px;top:108px" width="16" height="17" viewBox="0 0 16 17" shape-rendering="crispEdges"><g shape-rendering="geometricPrecision" fill="none"><path d="M1 15L15 0.500" stroke="#000"/><path d="M1 15L4 0M1 15L9 1M1 15l14-8M1 15l14-3" stroke="#d01020" stroke-width="1.100"/><circle cx="1.500" cy="14.500" r="1.500" fill="#d01020"/></g></svg>
<svg style="left:504px;top:108px" width="16" height="17" viewBox="0 0 16 17" shape-rendering="crispEdges"><g shape-rendering="geometricPrecision" fill="none"><rect x="1.500" y="2.500" width="12" height="12" stroke="#000" stroke-width="1" fill="#f8f8f8"/><path d="M1.500 14.500L13.500 2.500M1.500 14.500L8 2.500M1.500 14.500L13.500 9" stroke="#a01030" stroke-width=".9"/><path d="M1.500 9.500l5 5h-5z" fill="#900020"/><path d="M5 0.500v2M11 0.500v2M13.500 6h2.500M13.500 11h2.500M10 5l5-4" stroke="#000" stroke-width=".9"/></g></svg>
<svg style="left:527px;top:108px" width="16" height="17" viewBox="0 0 16 17" shape-rendering="crispEdges"><g shape-rendering="geometricPrecision" fill="none"><rect x="1.500" y="1.500" width="12" height="12" stroke="#200008" stroke-width="1.200" fill="#f8f8f8"/><path d="M1.500 1.500l12 12M1.500 1.500l12 6.500M1.500 1.500l6.500 12M3 3l12 12" stroke="#a01030" stroke-width=".9"/><path d="M1.500 1.500h5.500l-5.500 5.500z" fill="#900020"/><path d="M13.500 9l2.500 2.500M11 13.500l3.500 3M13.500 4h2M5 13.500v2" stroke="#c01020" stroke-width=".9"/></g></svg>
<svg style="left:550px;top:108px" width="16" height="17" viewBox="0 0 16 17" shape-rendering="crispEdges"><g shape-rendering="geometricPrecision" fill="none" stroke="#000"><path d="M0 15.500L15.500 0.500" stroke-width="1.200"/><path d="M0 15.500L15.500 7.500M0 15.500l15.500-3.500"/><path d="M0 15.500l4-1-1-2z" fill="#000"/></g></svg>
<svg style="left:573px;top:108px" width="16" height="17" viewBox="0 0 16 17" shape-rendering="crispEdges"><g shape-rendering="geometricPrecision" fill="none"><path d="M0.500 1L7 14.500l4-9 4.500 5" stroke="#000" stroke-width="1.100"/><path d="M0 14.500h16" stroke="#606060" stroke-dasharray="1 1"/></g></svg>
<svg style="left:596px;top:108px" width="16" height="17" viewBox="0 0 16 17" shape-rendering="crispEdges"><g fill="none"><path d="M1.5 1v13M1 1.5h13" stroke="#8c8c8c"/><path d="M4.5 1v13M1 4.5h13" stroke="#b08088"/><path d="M7.5 1v13M1 7.5h13" stroke="#8c8c8c"/><path d="M10.5 1v13M1 10.5h13" stroke="#b08088"/><path d="M13.5 1v13M1 13.5h13" stroke="#8c8c8c"/><rect x="6" y="6" width="3" height="3" fill="#d06070"/><circle cx="3" cy="3" r="1.200" stroke="#c08088" fill="#fff" shape-rendering="geometricPrecision" stroke-width=".8"/><circle cx="12" cy="3" r="1.200" stroke="#c08088" fill="#fff" shape-rendering="geometricPrecision" stroke-width=".8"/><circle cx="3" cy="12" r="1.200" stroke="#c08088" fill="#fff" shape-rendering="geometricPrecision" stroke-width=".8"/><circle cx="12" cy="12" r="1.200" stroke="#c08088" fill="#fff" shape-rendering="geometricPrecision" stroke-width=".8"/></g></svg>
<svg style="left:619px;top:108px" width="16" height="17" viewBox="0 0 16 17" shape-rendering="crispEdges"><g fill="none"><path d="M1.5 1v13M1 1.5h13" stroke="#8c8c8c"/><path d="M4.5 1v13M1 4.5h13" stroke="#b08088"/><path d="M7.5 1v13M1 7.5h13" stroke="#8c8c8c"/><path d="M10.5 1v13M1 10.5h13" stroke="#b08088"/><path d="M13.5 1v13M1 13.5h13" stroke="#8c8c8c"/><rect x="6" y="6" width="3" height="3" fill="#d06070"/><circle cx="3" cy="3" r="1.200" stroke="#c08088" fill="#fff" shape-rendering="geometricPrecision" stroke-width=".8"/><circle cx="12" cy="3" r="1.200" stroke="#c08088" fill="#fff" shape-rendering="geometricPrecision" stroke-width=".8"/><circle cx="3" cy="12" r="1.200" stroke="#c08088" fill="#fff" shape-rendering="geometricPrecision" stroke-width=".8"/><circle cx="12" cy="12" r="1.200" stroke="#c08088" fill="#fff" shape-rendering="geometricPrecision" stroke-width=".8"/><path d="M1.500 0v14.500h14" stroke="#000" stroke-width="1"/><path d="M1.500 0l-1.500 3h3zM16 14.500l-3-1.500v3z" fill="#000"/><path d="M3 3l11 11" stroke="#000" shape-rendering="geometricPrecision" stroke-width=".8"/></g></svg>
<svg style="left:642px;top:108px" width="16" height="17" viewBox="0 0 16 17" shape-rendering="crispEdges"><g shape-rendering="geometricPrecision" fill="none"><path d="M1 7L15 0.500M1 11L15 4.500M1 15L15 8.500" stroke="#000"/><path d="M1.500 5v11" stroke="#000"/><path d="M11.500 1v14" stroke="#808080"/></g></svg>
<div class="b" style="left:663px;top:104px;width:1px;height:24px;background:#a0a0a0;"></div>
<div class="b" style="left:664px;top:104px;width:1px;height:24px;background:#fff;"></div>
<div class="b" style="left:669px;top:106px;width:1px;height:21px;background:#fff;"></div>
<div class="b" style="left:670px;top:106px;width:1px;height:21px;background:#bcbcbc;"></div>
<svg style="left:675px;top:108px" width="16" height="17" viewBox="0 0 16 17" shape-rendering="crispEdges"><path d="M1.500 1v14" stroke="#000" fill="none" stroke-width="1.500"/><path d="M2 1.5h9" stroke="#000" fill="none"/><path d="M2 4.5h9" stroke="#000" fill="none"/><path d="M2 7.5h9" stroke="#000" fill="none"/><path d="M2 10.5h9" stroke="#000" fill="none"/><path d="M2 13.5h9" stroke="#000" fill="none"/><path d="M13.500 1v14" stroke="#000" stroke-dasharray="2 2" fill="none"/><path d="M12 4l2.500-3M12 12l2.500 3" stroke="#000" fill="none" shape-rendering="geometricPrecision"/></svg>
<svg style="left:698px;top:108px" width="16" height="17" viewBox="0 0 16 17" shape-rendering="crispEdges"><path d="M0 1.500h16M10 7.500h6M0 15.500h6" stroke="#e01020" fill="none" stroke-width="1.200"/><path d="M2.500 15.500L8 1.500l4 5.500" stroke="#000" fill="none" shape-rendering="geometricPrecision"/><path d="M16 2l-4 5" stroke="#000" fill="none" shape-rendering="geometricPrecision"/><text x="11.500" y="16" font-family="'Liberation Sans',sans-serif" font-size="10" fill="#e01020" text-anchor="middle" shape-rendering="auto">%</text></svg>
<svg style="left:721px;top:108px" width="16" height="17" viewBox="0 0 16 17" shape-rendering="crispEdges"><text x="7" y="14" font-family="'Liberation Sans',sans-serif" font-size="15" fill="#000" text-anchor="middle" shape-rendering="auto">%</text></svg>
<svg style="left:744px;top:108px" width="16" height="17" viewBox="0 0 16 17" shape-rendering="crispEdges"><path d="M0 0.500h16M7 4.500h9M10 8.500h6M7 11.500h9M0 15.500h16" stroke="#000" fill="none" stroke-width="1"/><text x="0" y="13" font-family="'Liberation Sans',sans-serif" font-size="10" font-weight="500" fill="#e01020" shape-rendering="auto">%</text></svg>
<svg style="left:767px;top:108px" width="16" height="17" viewBox="0 0 16 17" shape-rendering="crispEdges"><g shape-rendering="geometricPrecision"><circle cx="8" cy="8" r="7.300" fill="#f4f4d0" stroke="#909090"/><text x="8" y="12.500" font-family="'Liberation Sans','Noto Sans CJK SC',sans-serif" font-size="10.500" font-weight="500" fill="#909000" text-anchor="middle">金</text></g></svg>
<svg style="left:790px;top:108px" width="16" height="17" viewBox="0 0 16 17" shape-rendering="crispEdges"><path d="M0 0.500h16M7 4.500h9M10 8.500h6M7 11.500h9M0 15.500h16" stroke="#000" fill="none" stroke-width="1"/><text x="0" y="13" font-family="'Liberation Sans','Noto Sans CJK SC',sans-serif" font-size="10" font-weight="500" fill="#a0a000" shape-rendering="auto">金</text></svg>
<svg style="left:813px;top:108px" width="16" height="17" viewBox="0 0 16 17" shape-rendering="crispEdges"><path d="M2.500 0v16" stroke="#000" fill="none" stroke-width="1.300"/><path d="M0 2.5h5" stroke="#000" fill="none"/><path d="M0 5.5h5" stroke="#000" fill="none"/><path d="M0 8.5h5" stroke="#000" fill="none"/><path d="M0 11.5h5" stroke="#000" fill="none"/><path d="M0 14.5h5" stroke="#000" fill="none"/><g transform="translate(4,0) scale(0.85)" shape-rendering="geometricPrecision"><path d="M1.500 16L5 7 9.500 0.500 15.500 3.500 13 10 6.500 13.500z" fill="#e01818"/><path d="M5.500 10.500L8.500 4.500 12.500 6.500 10 11z" fill="#b8b8b8"/><path d="M6.500 9.500L9 5.500 10.500 6.200 8.500 10z" fill="#fff"/><path d="M1.500 16L4 10.500 7 12.500z" fill="#f4f4f4" stroke="#e01818" stroke-width=".5"/><path d="M1.500 16l.9-2.200 1.300.9z" fill="#000"/><path d="M9.500 0.500L15.500 3.500 14.500 6 8.500 2.500z" fill="#c01010"/></g></svg>
<svg style="left:836px;top:108px" width="16" height="17" viewBox="0 0 16 17" shape-rendering="crispEdges"><path d="M0 0.500h16M0 15.500h16" stroke="#e01020" fill="none" stroke-width="1.200"/><path d="M0 6.500h16" stroke="#606060" fill="none"/><path d="M0 11c2 0 2.500-8 4.500-8S7 14 9.500 14 12 3 14 3s1.500 3 2 4" stroke="#707070" fill="none" shape-rendering="geometricPrecision"/></svg>
<svg style="left:859px;top:108px" width="16" height="17" viewBox="0 0 16 17" shape-rendering="crispEdges"><path d="M0 0.500h16M0 15.500h16" stroke="#e01020" fill="none" stroke-width="1.200"/><text x="8" y="13" font-family="'Liberation Sans','Noto Sans CJK SC',sans-serif" font-size="10.500" font-weight="500" fill="#909000" text-anchor="middle" shape-rendering="auto">金</text></svg>
<svg style="left:882px;top:108px" width="16" height="17" viewBox="0 0 16 17" shape-rendering="crispEdges"><g shape-rendering="geometricPrecision" fill="none" stroke="#000" stroke-width="1.200"><path d="M0 16L16 0.500"/></g><path d="M9 7.500h7M5 11.500h11M1 15.500h15" stroke="#000" fill="none" stroke-width="1.200"/><text x="0" y="9.5" font-family="'Liberation Sans',sans-serif" font-size="12" font-weight="700" fill="#e01020" shape-rendering="auto">J</text></svg>
<svg style="left:905px;top:108px" width="16" height="17" viewBox="0 0 16 17" shape-rendering="crispEdges"><g shape-rendering="geometricPrecision" fill="none" stroke="#000" stroke-width="1.200"><path d="M0 16L16 0.500"/></g><path d="M9 7.500h7M5 11.500h11M1 15.500h15" stroke="#000" fill="none" stroke-width="1.200"/><text x="0" y="9.5" font-family="'Liberation Sans',sans-serif" font-size="12" font-weight="700" fill="#e01020" shape-rendering="auto">F</text></svg>
<svg style="left:928px;top:108px" width="16" height="17" viewBox="0 0 16 17" shape-rendering="crispEdges"><g shape-rendering="geometricPrecision" fill="none" stroke="#000" stroke-width="1.200"><path d="M0 16L16 0.500"/></g><path d="M9 7.500h7M5 11.500h11M1 15.500h15" stroke="#000" fill="none" stroke-width="1.200"/><text x="0" y="9.5" font-family="'Liberation Sans','Noto Sans CJK SC',sans-serif" font-size="10" font-weight="500" fill="#909000" shape-rendering="auto">金</text></svg>
<svg style="left:951px;top:108px" width="16" height="17" viewBox="0 0 16 17" shape-rendering="crispEdges"><g shape-rendering="geometricPrecision" fill="none" stroke="#000" stroke-width="1.200"><path d="M0 16L16 0.500"/></g><path d="M9 7.500h7M5 11.500h11M1 15.500h15" stroke="#000" fill="none" stroke-width="1.200"/><text x="0" y="9.5" font-family="'Liberation Sans','Noto Sans CJK SC',sans-serif" font-size="10" font-weight="500" fill="#e01020" shape-rendering="auto">神</text></svg>
<svg style="left:974px;top:108px" width="16" height="17" viewBox="0 0 16 17" shape-rendering="crispEdges"><g shape-rendering="geometricPrecision" fill="none" stroke="#000" stroke-width="1.200"><path d="M0 16L16 0.500"/></g><path d="M9 7.500h7M5 11.500h11M1 15.500h15" stroke="#000" fill="none" stroke-width="1.200"/><text x="0" y="9.5" font-family="'Liberation Sans','Noto Sans CJK SC',sans-serif" font-size="10" font-weight="500" fill="#e01020" shape-rendering="auto">赢</text></svg>
<svg style="left:997px;top:108px" width="16" height="17" viewBox="0 0 16 17" shape-rendering="crispEdges"><g shape-rendering="geometricPrecision" fill="none" stroke="#000" stroke-width="1.200"><path d="M0 16L16 0.500"/></g><path d="M9 7.500h7M5 11.500h11M1 15.500h15" stroke="#000" fill="none" stroke-width="1.200"/><text x="0" y="9.5" font-family="'Liberation Sans','Noto Sans CJK SC',sans-serif" font-size="10" font-weight="500" fill="#e01020" shape-rendering="auto">四</text></svg>
<div class="b" style="left:1018px;top:104px;width:1px;height:24px;background:#a0a0a0;"></div>
<div class="b" style="left:1019px;top:104px;width:1px;height:24px;background:#fff;"></div>
<div class="b" style="left:1024px;top:106px;width:1px;height:21px;background:#fff;"></div>
<div class="b" style="left:1025px;top:106px;width:1px;height:21px;background:#bcbcbc;"></div>
<svg style="left:1030px;top:108px" width="16" height="16" viewBox="0 0 16 16" shape-rendering="crispEdges"><g shape-rendering="geometricPrecision"><circle cx="8" cy="8" r="8" fill="#e01020"/><path d="M8 0a8 8 0 0 1 0 16a4 4 0 0 1 0-8a4 4 0 0 0 0-8z" fill="#80c8f0"/><circle cx="8" cy="4" r="1.600" fill="#e01020"/><circle cx="8" cy="12" r="1.600" fill="#80c8f0"/></g></svg>
<svg style="left:1053px;top:108px" width="16" height="16" viewBox="0 0 16 16" shape-rendering="crispEdges"><g shape-rendering="geometricPrecision" fill="none" stroke-width="2.200"><path d="M8 8C6 5 1.500 4.500 1.500 8S6 11 8 8" stroke="#4080e0"/><path d="M8 8c2-3 6.500-3.500 6.500 0S10 11 8 8" stroke="#e02030"/><path d="M5 5.500C7 6 8 8 8 8" stroke="#e02030"/></g></svg>
<div class="b" style="left:0px;top:129px;width:1358px;height:552px;background:#fff;"></div>
<div class="b" style="left:70px;top:142px;width:1288px;height:1px;background:#a0a0a0;"></div>
<div class="t" style="left:72px;top:131.5px;font:400 9.2px/10px 'Liberation Sans','Noto Sans CJK SC',sans-serif;color:#a0a0a0;transform:scaleX(.85);transform-origin:0 50%;">08-14</div>
<div class="t" style="left:130px;top:131.5px;font:400 9.2px/10px 'Liberation Sans','Noto Sans CJK SC',sans-serif;color:#a0a0a0;transform:scaleX(.85);transform-origin:0 50%;">10-23</div>
<div class="t" style="left:200px;top:131.5px;font:400 9.2px/10px 'Liberation Sans','Noto Sans CJK SC',sans-serif;color:#a0a0a0;transform:scaleX(.85);transform-origin:0 50%;">12-31</div>
<div class="t" style="left:270.5px;top:131.5px;font:400 9.2px/10px 'Liberation Sans','Noto Sans CJK SC',sans-serif;color:#a0a0a0;transform:scaleX(.85);transform-origin:0 50%;">03-12</div>
<div class="t" style="left:340.5px;top:131.5px;font:400 9.2px/10px 'Liberation Sans','Noto Sans CJK SC',sans-serif;color:#a0a0a0;transform:scaleX(.85);transform-origin:0 50%;">05-21</div>
<div class="t" style="left:410.5px;top:131.5px;font:400 9.2px/10px 'Liberation Sans','Noto Sans CJK SC',sans-serif;color:#a0a0a0;transform:scaleX(.85);transform-origin:0 50%;">07-30</div>
<div class="t" style="left:480.5px;top:131.5px;font:400 9.2px/10px 'Liberation Sans','Noto Sans CJK SC',sans-serif;color:#a0a0a0;transform:scaleX(.85);transform-origin:0 50%;">10-08</div>
<div class="t" style="left:550.5px;top:131.5px;font:400 9.2px/10px 'Liberation Sans','Noto Sans CJK SC',sans-serif;color:#a0a0a0;transform:scaleX(.85);transform-origin:0 50%;">12-17</div>
<div class="t" style="left:620.5px;top:131.5px;font:400 9.2px/10px 'Liberation Sans','Noto Sans CJK SC',sans-serif;color:#a0a0a0;transform:scaleX(.85);transform-origin:0 50%;">03-04</div>
<div class="t" style="left:690px;top:131.5px;font:400 9.2px/10px 'Liberation Sans','Noto Sans CJK SC',sans-serif;color:#a0a0a0;transform:scaleX(.85);transform-origin:0 50%;">05-13</div>
<div class="t" style="left:760px;top:131.5px;font:400 9.2px/10px 'Liberation Sans','Noto Sans CJK SC',sans-serif;color:#a0a0a0;transform:scaleX(.85);transform-origin:0 50%;">07-22</div>
<div class="t" style="left:830px;top:131.5px;font:400 9.2px/10px 'Liberation Sans','Noto Sans CJK SC',sans-serif;color:#a0a0a0;transform:scaleX(.85);transform-origin:0 50%;">09-30</div>
<div class="t" style="left:900px;top:131.5px;font:400 9.2px/10px 'Liberation Sans','Noto Sans CJK SC',sans-serif;color:#a0a0a0;transform:scaleX(.85);transform-origin:0 50%;">12-16</div>
<div class="t" style="left:970px;top:131.5px;font:400 9.2px/10px 'Liberation Sans','Noto Sans CJK SC',sans-serif;color:#a0a0a0;transform:scaleX(.85);transform-origin:0 50%;">03-03</div>
<div class="t" style="left:1040px;top:131.5px;font:400 9.2px/10px 'Liberation Sans','Noto Sans CJK SC',sans-serif;color:#a0a0a0;transform:scaleX(.85);transform-origin:0 50%;">05-12</div>
<div class="t" style="left:1180.5px;top:131.5px;font:400 9.2px/10px 'Liberation Sans','Noto Sans CJK SC',sans-serif;color:#a0a0a0;transform:scaleX(.85);transform-origin:0 50%;">09-25</div>
<div class="t" style="left:1250px;top:131.5px;font:400 9.2px/10px 'Liberation Sans','Noto Sans CJK SC',sans-serif;color:#a0a0a0;transform:scaleX(.85);transform-origin:0 50%;">12-04</div>
<div class="t" style="left:1320px;top:131.5px;font:400 9.2px/10px 'Liberation Sans','Noto Sans CJK SC',sans-serif;color:#a0a0a0;transform:scaleX(.85);transform-origin:0 50%;">02-12</div>
<div class="b" style="left:1074px;top:130px;width:56px;height:12px;background:#f80000;"></div>
<div class="t" style="left:1075px;top:130.3px;font:400 12.5px/12px 'Liberation Sans','Noto Sans CJK SC',sans-serif;color:#fff;transform:scaleX(.84);transform-origin:0 50%;">2023-06-30</div>
<div class="t" style="left:4.5px;top:134.5px;font:400 12.5px/18px 'Liberation Mono','Noto Sans CJK SC',sans-serif;color:#0000c8;letter-spacing:-0.8px;">周K线</div>
<div class="t" style="left:72px;top:143.0px;font:400 12.5px/18px 'Liberation Mono','Noto Sans CJK SC',sans-serif;color:#000;">极反通道</div>
<div class="t" style="left:141px;top:141.8px;font:400 10.7px/16px 'Liberation Sans','Noto Sans CJK SC',sans-serif;color:#c00000;">Tp=25.4950</div>
<div class="t" style="left:219.5px;top:141.8px;font:400 10.7px/16px 'Liberation Sans','Noto Sans CJK SC',sans-serif;color:#000090;">Up=20.0147</div>
<div class="t" style="left:298.5px;top:141.8px;font:400 10.7px/16px 'Liberation Sans','Noto Sans CJK SC',sans-serif;color:#000;">Md=13.8691</div>
<div class="t" style="left:377.5px;top:141.8px;font:400 10.7px/16px 'Liberation Sans','Noto Sans CJK SC',sans-serif;color:#000090;">Dn=5.7739</div>
<div class="t" style="left:456.5px;top:141.8px;font:400 10.7px/16px 'Liberation Sans','Noto Sans CJK SC',sans-serif;color:#c00000;">Bt=-1.0000</div>
<div class="t" style="left:1258.5px;top:142.5px;font:400 12.5px/18px 'Liberation Mono','Noto Sans CJK SC',monospace;color:#000090;transform:scaleX(.9);transform-origin:0 50%;">002949</div>
<div class="t" style="left:1307.5px;top:143.0px;font:400 12.5px/18px 'Liberation Mono','Noto Sans CJK SC',sans-serif;color:#000090;">华阳国际</div>
<div class="b" style="left:1px;top:251px;width:70px;height:12px;background:#ff0000;border-top:1px solid #500000;border-right:1px solid #500000;box-sizing:border-box"></div>
<div class="t" style="left:2px;top:251.3px;font:400 12.5px/12px 'Liberation Sans','Noto Sans CJK SC',sans-serif;color:#fff;transform:scaleX(.84);transform-origin:0 50%;">37.9262</div>
<div class="t" style="left:102px;top:276.5px;font:400 11px/17px 'DejaVu Sans','Liberation Sans',sans-serif;color:#2828c8;">36.1600</div>
<div class="t" style="left:711px;top:487.5px;font:400 11px/17px 'DejaVu Sans','Liberation Sans',sans-serif;color:#2828c8;">11.2100</div>
<div class="t" style="left:33px;top:590.0px;font:400 12px/12px 'Liberation Serif',serif;color:#202020;">0<span style="letter-spacing:1.5px">.</span><span style="margin-left:1.5px"></span>2844</div>
<div class="t" style="left:33px;top:618.0px;font:400 12px/12px 'Liberation Serif',serif;color:#202020;">440416</div>
<div class="t" style="left:33px;top:637.0px;font:400 12px/12px 'Liberation Serif',serif;color:#202020;">293611</div>
<div class="t" style="left:33px;top:656.0px;font:400 12px/12px 'Liberation Serif',serif;color:#202020;">146805</div>
<div class="t" style="left:358.5px;top:590.5px;font:400 10.5px/12px 'Liberation Sans','Noto Sans CJK SC',sans-serif;color:#d00020;">$</div>
<div class="t" style="left:708.2px;top:590.5px;font:400 10.5px/12px 'Liberation Sans','Noto Sans CJK SC',sans-serif;color:#d00020;">$</div>
<div class="t" style="left:1065.6px;top:590.5px;font:400 10.5px/12px 'Liberation Sans','Noto Sans CJK SC',sans-serif;color:#d00020;">$</div>
<svg style="left:0;top:0" width="1360" height="736" viewBox="0 0 1360 736">
<g shape-rendering="crispEdges">
<path d="M70 602.5H1358" stroke="#989898" stroke-dasharray="3 3" fill="none"/>
<path d="M70 624.5H1358" stroke="#989898" stroke-dasharray="3 3" fill="none"/>
<path d="M70 643.5H1358" stroke="#989898" stroke-dasharray="3 3" fill="none"/>
<path d="M70 662.5H1358" stroke="#989898" stroke-dasharray="3 3" fill="none"/>
<path d="M70 257.5H1358" stroke="#000" stroke-dasharray="3 3" fill="none"/>
<path d="M1149 458.5H1358" stroke="#808080" stroke-dasharray="4 2" fill="none"/>
<rect x="74" y="289" width="1" height="11" fill="#c4102e"/>
<rect x="74" y="314" width="1" height="15" fill="#c4102e"/>
<rect x="71.5" y="300.5" width="5" height="13" fill="#fff" stroke="#c4102e"/>
<rect x="81" y="273" width="1" height="24" fill="#056b14"/>
<rect x="81" y="313" width="1" height="21" fill="#056b14"/>
<rect x="78.5" y="297.5" width="5" height="15" fill="#008000" stroke="#056b14"/>
<rect x="88" y="287" width="1" height="6" fill="#c4102e"/>
<rect x="88" y="306" width="1" height="16" fill="#c4102e"/>
<rect x="85.5" y="293.5" width="5" height="12" fill="#fff" stroke="#c4102e"/>
<rect x="95" y="281" width="1" height="6" fill="#056b14"/>
<rect x="95" y="316" width="1" height="3" fill="#056b14"/>
<rect x="92.5" y="287.5" width="5" height="28" fill="#008000" stroke="#056b14"/>
<rect x="102" y="364" width="1" height="5" fill="#056b14"/>
<rect x="99.5" y="309.5" width="5" height="54" fill="#008000" stroke="#056b14"/>
<rect x="109" y="342" width="1" height="10" fill="#c4102e"/>
<rect x="109" y="362" width="1" height="6" fill="#c4102e"/>
<rect x="106.5" y="352.5" width="5" height="9" fill="#fff" stroke="#c4102e"/>
<rect x="116" y="347" width="1" height="4" fill="#056b14"/>
<rect x="116" y="369" width="1" height="5" fill="#056b14"/>
<rect x="113.5" y="351.5" width="5" height="17" fill="#008000" stroke="#056b14"/>
<rect x="123" y="363" width="1" height="2" fill="#056b14"/>
<rect x="123" y="378" width="1" height="6" fill="#056b14"/>
<rect x="120.5" y="365.5" width="5" height="12" fill="#008000" stroke="#056b14"/>
<rect x="130" y="362" width="1" height="4" fill="#c4102e"/>
<rect x="127.5" y="366.5" width="5" height="7" fill="#fff" stroke="#c4102e"/>
<rect x="137" y="346" width="1" height="9" fill="#c4102e"/>
<rect x="137" y="363" width="1" height="5" fill="#c4102e"/>
<rect x="134.5" y="355.5" width="5" height="7" fill="#fff" stroke="#c4102e"/>
<rect x="144" y="344" width="1" height="9" fill="#056b14"/>
<rect x="141.5" y="353.5" width="5" height="10" fill="#008000" stroke="#056b14"/>
<rect x="151" y="345" width="1" height="20" fill="#056b14"/>
<rect x="151" y="373" width="1" height="9" fill="#056b14"/>
<rect x="148.5" y="365.5" width="5" height="7" fill="#008000" stroke="#056b14"/>
<rect x="158" y="372" width="1" height="6" fill="#056b14"/>
<rect x="158" y="401" width="1" height="4" fill="#056b14"/>
<rect x="155.5" y="378.5" width="5" height="22" fill="#008000" stroke="#056b14"/>
<rect x="165" y="380" width="1" height="14" fill="#c4102e"/>
<rect x="165" y="401" width="1" height="1" fill="#c4102e"/>
<rect x="162.5" y="394.5" width="5" height="6" fill="#fff" stroke="#c4102e"/>
<rect x="172" y="400" width="1" height="4" fill="#056b14"/>
<rect x="169.5" y="392.5" width="5" height="7" fill="#008000" stroke="#056b14"/>
<rect x="179" y="398" width="1" height="2" fill="#056b14"/>
<rect x="179" y="415" width="1" height="3" fill="#056b14"/>
<rect x="176.5" y="400.5" width="5" height="14" fill="#008000" stroke="#056b14"/>
<rect x="186" y="402" width="1" height="6" fill="#c4102e"/>
<rect x="186" y="414" width="1" height="5" fill="#c4102e"/>
<rect x="183.5" y="408.5" width="5" height="5" fill="#fff" stroke="#c4102e"/>
<rect x="193" y="406" width="1" height="1" fill="#056b14"/>
<rect x="193" y="426" width="1" height="2" fill="#056b14"/>
<rect x="190.5" y="407.5" width="5" height="18" fill="#008000" stroke="#056b14"/>
<rect x="200" y="424" width="1" height="5" fill="#056b14"/>
<rect x="200" y="432" width="1" height="2" fill="#056b14"/>
<rect x="197.5" y="429.5" width="5" height="2" fill="#008000" stroke="#056b14"/>
<rect x="207" y="431" width="1" height="3" fill="#056b14"/>
<rect x="207" y="442" width="1" height="5" fill="#056b14"/>
<rect x="204.5" y="434.5" width="5" height="7" fill="#008000" stroke="#056b14"/>
<rect x="214" y="436" width="1" height="8" fill="#056b14"/>
<rect x="211" y="442" width="6" height="1" fill="#056b14"/>
<rect x="221" y="438" width="1" height="3" fill="#056b14"/>
<rect x="221" y="449" width="1" height="13" fill="#056b14"/>
<rect x="218.5" y="441.5" width="5" height="7" fill="#008000" stroke="#056b14"/>
<rect x="228" y="407" width="1" height="16" fill="#c4102e"/>
<rect x="228" y="450" width="1" height="5" fill="#c4102e"/>
<rect x="225.5" y="423.5" width="5" height="26" fill="#fff" stroke="#c4102e"/>
<rect x="235" y="401" width="1" height="8" fill="#c4102e"/>
<rect x="235" y="423" width="1" height="8" fill="#c4102e"/>
<rect x="232.5" y="409.5" width="5" height="13" fill="#fff" stroke="#c4102e"/>
<rect x="242" y="409" width="1" height="1" fill="#056b14"/>
<rect x="242" y="428" width="1" height="24" fill="#056b14"/>
<rect x="239.5" y="410.5" width="5" height="17" fill="#008000" stroke="#056b14"/>
<rect x="249" y="428" width="1" height="6" fill="#056b14"/>
<rect x="249" y="446" width="1" height="11" fill="#056b14"/>
<rect x="246.5" y="434.5" width="5" height="11" fill="#008000" stroke="#056b14"/>
<rect x="256" y="438" width="1" height="10" fill="#056b14"/>
<rect x="253" y="446" width="6" height="1" fill="#056b14"/>
<rect x="263" y="445" width="1" height="1" fill="#c4102e"/>
<rect x="260.5" y="418.5" width="5" height="26" fill="#fff" stroke="#c4102e"/>
<rect x="270" y="412" width="1" height="6" fill="#056b14"/>
<rect x="270" y="422" width="1" height="7" fill="#056b14"/>
<rect x="267.5" y="418.5" width="5" height="3" fill="#008000" stroke="#056b14"/>
<rect x="277" y="384" width="1" height="17" fill="#c4102e"/>
<rect x="277" y="422" width="1" height="3" fill="#c4102e"/>
<rect x="274.5" y="401.5" width="5" height="20" fill="#fff" stroke="#c4102e"/>
<rect x="284" y="383" width="1" height="13" fill="#056b14"/>
<rect x="284" y="409" width="1" height="5" fill="#056b14"/>
<rect x="281.5" y="396.5" width="5" height="12" fill="#008000" stroke="#056b14"/>
<rect x="291" y="399" width="1" height="10" fill="#056b14"/>
<rect x="291" y="413" width="1" height="8" fill="#056b14"/>
<rect x="288.5" y="409.5" width="5" height="3" fill="#008000" stroke="#056b14"/>
<rect x="298" y="415" width="1" height="4" fill="#056b14"/>
<rect x="298" y="429" width="1" height="5" fill="#056b14"/>
<rect x="295.5" y="419.5" width="5" height="9" fill="#008000" stroke="#056b14"/>
<rect x="305" y="415" width="1" height="11" fill="#c4102e"/>
<rect x="305" y="429" width="1" height="3" fill="#c4102e"/>
<rect x="302.5" y="426.5" width="5" height="2" fill="#fff" stroke="#c4102e"/>
<rect x="312" y="429" width="1" height="2" fill="#056b14"/>
<rect x="309.5" y="426.5" width="5" height="2" fill="#008000" stroke="#056b14"/>
<rect x="319" y="434" width="1" height="8" fill="#056b14"/>
<rect x="316.5" y="429.5" width="5" height="4" fill="#008000" stroke="#056b14"/>
<rect x="326" y="422" width="1" height="13" fill="#c4102e"/>
<rect x="323" y="433" width="6" height="2" fill="#c4102e"/>
<rect x="333" y="431" width="1" height="6" fill="#056b14"/>
<rect x="333" y="442" width="1" height="1" fill="#056b14"/>
<rect x="330.5" y="437.5" width="5" height="4" fill="#008000" stroke="#056b14"/>
<rect x="340" y="448" width="1" height="1" fill="#056b14"/>
<rect x="337.5" y="442.5" width="5" height="5" fill="#008000" stroke="#056b14"/>
<rect x="347" y="444" width="1" height="6" fill="#c4102e"/>
<rect x="344" y="446" width="6" height="2" fill="#c4102e"/>
<rect x="354" y="441" width="1" height="1" fill="#c4102e"/>
<rect x="354" y="446" width="1" height="2" fill="#c4102e"/>
<rect x="351.5" y="442.5" width="5" height="3" fill="#fff" stroke="#c4102e"/>
<rect x="361" y="443" width="1" height="4" fill="#056b14"/>
<rect x="358.5" y="441.5" width="5" height="1" fill="#008000" stroke="#056b14"/>
<rect x="368" y="442" width="1" height="2" fill="#056b14"/>
<rect x="368" y="446" width="1" height="8" fill="#056b14"/>
<rect x="365.5" y="444.5" width="5" height="1" fill="#008000" stroke="#056b14"/>
<rect x="375" y="452" width="1" height="1" fill="#056b14"/>
<rect x="372.5" y="447.5" width="5" height="4" fill="#008000" stroke="#056b14"/>
<rect x="382" y="451" width="1" height="2" fill="#056b14"/>
<rect x="382" y="458" width="1" height="1" fill="#056b14"/>
<rect x="379.5" y="453.5" width="5" height="4" fill="#008000" stroke="#056b14"/>
<rect x="389" y="448" width="1" height="10" fill="#c4102e"/>
<rect x="386" y="455" width="6" height="1" fill="#c4102e"/>
<rect x="396" y="453" width="1" height="1" fill="#056b14"/>
<rect x="396" y="457" width="1" height="1" fill="#056b14"/>
<rect x="393.5" y="454.5" width="5" height="2" fill="#008000" stroke="#056b14"/>
<rect x="403" y="455" width="1" height="2" fill="#056b14"/>
<rect x="403" y="461" width="1" height="2" fill="#056b14"/>
<rect x="400.5" y="457.5" width="5" height="3" fill="#008000" stroke="#056b14"/>
<rect x="410" y="452" width="1" height="3" fill="#c4102e"/>
<rect x="407.5" y="455.5" width="5" height="5" fill="#fff" stroke="#c4102e"/>
<rect x="417" y="441" width="1" height="15" fill="#c4102e"/>
<rect x="414" y="454" width="6" height="1" fill="#c4102e"/>
<rect x="424" y="455" width="1" height="2" fill="#056b14"/>
<rect x="421.5" y="457.5" width="5" height="8" fill="#008000" stroke="#056b14"/>
<rect x="431" y="456" width="1" height="18" fill="#c4102e"/>
<rect x="428" y="465" width="6" height="1" fill="#c4102e"/>
<rect x="438" y="453" width="1" height="3" fill="#c4102e"/>
<rect x="435.5" y="456.5" width="5" height="7" fill="#fff" stroke="#c4102e"/>
<rect x="445" y="455" width="1" height="1" fill="#056b14"/>
<rect x="445" y="469" width="1" height="2" fill="#056b14"/>
<rect x="442.5" y="456.5" width="5" height="12" fill="#008000" stroke="#056b14"/>
<rect x="452" y="462" width="1" height="4" fill="#c4102e"/>
<rect x="449.5" y="466.5" width="5" height="3" fill="#fff" stroke="#c4102e"/>
<rect x="459" y="455" width="1" height="3" fill="#c4102e"/>
<rect x="459" y="466" width="1" height="3" fill="#c4102e"/>
<rect x="456.5" y="458.5" width="5" height="7" fill="#fff" stroke="#c4102e"/>
<rect x="466" y="454" width="1" height="4" fill="#056b14"/>
<rect x="463.5" y="458.5" width="5" height="2" fill="#008000" stroke="#056b14"/>
<rect x="473" y="458" width="1" height="3" fill="#056b14"/>
<rect x="473" y="469" width="1" height="1" fill="#056b14"/>
<rect x="470.5" y="461.5" width="5" height="7" fill="#008000" stroke="#056b14"/>
<rect x="480" y="469" width="1" height="1" fill="#056b14"/>
<rect x="480" y="473" width="1" height="1" fill="#056b14"/>
<rect x="477.5" y="470.5" width="5" height="2" fill="#008000" stroke="#056b14"/>
<rect x="487" y="471" width="1" height="2" fill="#056b14"/>
<rect x="487" y="476" width="1" height="6" fill="#056b14"/>
<rect x="484.5" y="473.5" width="5" height="2" fill="#008000" stroke="#056b14"/>
<rect x="494" y="473" width="1" height="1" fill="#c4102e"/>
<rect x="491.5" y="474.5" width="5" height="2" fill="#fff" stroke="#c4102e"/>
<rect x="501" y="472" width="1" height="1" fill="#056b14"/>
<rect x="501" y="480" width="1" height="1" fill="#056b14"/>
<rect x="498.5" y="473.5" width="5" height="6" fill="#008000" stroke="#056b14"/>
<rect x="508" y="486" width="1" height="1" fill="#056b14"/>
<rect x="505.5" y="479.5" width="5" height="6" fill="#008000" stroke="#056b14"/>
<rect x="515" y="482" width="1" height="10" fill="#c4102e"/>
<rect x="512" y="484" width="6" height="2" fill="#c4102e"/>
<rect x="522" y="484" width="1" height="4" fill="#056b14"/>
<rect x="519" y="486" width="6" height="1" fill="#056b14"/>
<rect x="529" y="475" width="1" height="4" fill="#c4102e"/>
<rect x="529" y="484" width="1" height="2" fill="#c4102e"/>
<rect x="526.5" y="479.5" width="5" height="4" fill="#fff" stroke="#c4102e"/>
<rect x="536" y="476" width="1" height="5" fill="#c4102e"/>
<rect x="533" y="478" width="6" height="1" fill="#c4102e"/>
<rect x="543" y="474" width="1" height="5" fill="#c4102e"/>
<rect x="540" y="477" width="6" height="1" fill="#c4102e"/>
<rect x="550" y="472" width="1" height="2" fill="#c4102e"/>
<rect x="550" y="477" width="1" height="3" fill="#c4102e"/>
<rect x="547.5" y="474.5" width="5" height="2" fill="#fff" stroke="#c4102e"/>
<rect x="557" y="470" width="1" height="6" fill="#c4102e"/>
<rect x="554" y="472" width="6" height="1" fill="#c4102e"/>
<rect x="564" y="476" width="1" height="1" fill="#056b14"/>
<rect x="561.5" y="471.5" width="5" height="4" fill="#008000" stroke="#056b14"/>
<rect x="571" y="457" width="1" height="13" fill="#c4102e"/>
<rect x="571" y="476" width="1" height="4" fill="#c4102e"/>
<rect x="568.5" y="470.5" width="5" height="5" fill="#fff" stroke="#c4102e"/>
<rect x="578" y="432" width="1" height="10" fill="#c4102e"/>
<rect x="575.5" y="442.5" width="5" height="26" fill="#fff" stroke="#c4102e"/>
<rect x="585" y="414" width="1" height="4" fill="#c4102e"/>
<rect x="585" y="441" width="1" height="4" fill="#c4102e"/>
<rect x="582.5" y="418.5" width="5" height="22" fill="#fff" stroke="#c4102e"/>
<rect x="592" y="411" width="1" height="12" fill="#056b14"/>
<rect x="589.5" y="423.5" width="5" height="18" fill="#008000" stroke="#056b14"/>
<rect x="599" y="418" width="1" height="10" fill="#c4102e"/>
<rect x="599" y="442" width="1" height="3" fill="#c4102e"/>
<rect x="596.5" y="428.5" width="5" height="13" fill="#fff" stroke="#c4102e"/>
<rect x="606" y="421" width="1" height="7" fill="#056b14"/>
<rect x="606" y="448" width="1" height="2" fill="#056b14"/>
<rect x="603.5" y="428.5" width="5" height="19" fill="#008000" stroke="#056b14"/>
<rect x="613" y="423" width="1" height="17" fill="#c4102e"/>
<rect x="613" y="452" width="1" height="4" fill="#c4102e"/>
<rect x="610.5" y="440.5" width="5" height="11" fill="#fff" stroke="#c4102e"/>
<rect x="620" y="442" width="1" height="6" fill="#c4102e"/>
<rect x="617.5" y="426.5" width="5" height="15" fill="#fff" stroke="#c4102e"/>
<rect x="627" y="409" width="1" height="23" fill="#056b14"/>
<rect x="627" y="442" width="1" height="8" fill="#056b14"/>
<rect x="624.5" y="432.5" width="5" height="9" fill="#008000" stroke="#056b14"/>
<rect x="634" y="443" width="1" height="1" fill="#056b14"/>
<rect x="634" y="460" width="1" height="1" fill="#056b14"/>
<rect x="631.5" y="444.5" width="5" height="15" fill="#008000" stroke="#056b14"/>
<rect x="641" y="471" width="1" height="6" fill="#056b14"/>
<rect x="638.5" y="460.5" width="5" height="10" fill="#008000" stroke="#056b14"/>
<rect x="648" y="472" width="1" height="14" fill="#c4102e"/>
<rect x="645.5" y="465.5" width="5" height="6" fill="#fff" stroke="#c4102e"/>
<rect x="655" y="457" width="1" height="6" fill="#056b14"/>
<rect x="655" y="470" width="1" height="1" fill="#056b14"/>
<rect x="652.5" y="463.5" width="5" height="6" fill="#008000" stroke="#056b14"/>
<rect x="662" y="466" width="1" height="4" fill="#056b14"/>
<rect x="662" y="473" width="1" height="2" fill="#056b14"/>
<rect x="659.5" y="470.5" width="5" height="2" fill="#008000" stroke="#056b14"/>
<rect x="669" y="460" width="1" height="4" fill="#c4102e"/>
<rect x="669" y="472" width="1" height="1" fill="#c4102e"/>
<rect x="666.5" y="464.5" width="5" height="7" fill="#fff" stroke="#c4102e"/>
<rect x="676" y="459" width="1" height="6" fill="#056b14"/>
<rect x="676" y="479" width="1" height="1" fill="#056b14"/>
<rect x="673.5" y="465.5" width="5" height="13" fill="#008000" stroke="#056b14"/>
<rect x="683" y="477" width="1" height="4" fill="#056b14"/>
<rect x="683" y="492" width="1" height="1" fill="#056b14"/>
<rect x="680.5" y="481.5" width="5" height="10" fill="#008000" stroke="#056b14"/>
<rect x="690" y="495" width="1" height="7" fill="#056b14"/>
<rect x="687" y="495" width="6" height="1" fill="#056b14"/>
<rect x="697" y="492" width="1" height="4" fill="#056b14"/>
<rect x="694" y="495" width="6" height="1" fill="#056b14"/>
<rect x="704" y="474" width="1" height="4" fill="#c4102e"/>
<rect x="704" y="494" width="1" height="1" fill="#c4102e"/>
<rect x="701.5" y="478.5" width="5" height="15" fill="#fff" stroke="#c4102e"/>
<rect x="711" y="475" width="1" height="3" fill="#056b14"/>
<rect x="711" y="482" width="1" height="3" fill="#056b14"/>
<rect x="708.5" y="478.5" width="5" height="3" fill="#008000" stroke="#056b14"/>
<rect x="718" y="486" width="1" height="4" fill="#056b14"/>
<rect x="715.5" y="482.5" width="5" height="3" fill="#008000" stroke="#056b14"/>
<rect x="725" y="490" width="1" height="3" fill="#056b14"/>
<rect x="722.5" y="486.5" width="5" height="3" fill="#008000" stroke="#056b14"/>
<rect x="732" y="487" width="1" height="9" fill="#056b14"/>
<rect x="729" y="491" width="6" height="1" fill="#056b14"/>
<rect x="739" y="494" width="1" height="6" fill="#056b14"/>
<rect x="736.5" y="492.5" width="5" height="1" fill="#008000" stroke="#056b14"/>
<rect x="746" y="486" width="1" height="4" fill="#c4102e"/>
<rect x="746" y="493" width="1" height="1" fill="#c4102e"/>
<rect x="743.5" y="490.5" width="5" height="2" fill="#fff" stroke="#c4102e"/>
<rect x="753" y="482" width="1" height="2" fill="#c4102e"/>
<rect x="753" y="487" width="1" height="1" fill="#c4102e"/>
<rect x="750.5" y="484.5" width="5" height="2" fill="#fff" stroke="#c4102e"/>
<rect x="760" y="478" width="1" height="9" fill="#056b14"/>
<rect x="757" y="484" width="6" height="1" fill="#056b14"/>
<rect x="767" y="483" width="1" height="1" fill="#056b14"/>
<rect x="767" y="486" width="1" height="1" fill="#056b14"/>
<rect x="764.5" y="484.5" width="5" height="1" fill="#008000" stroke="#056b14"/>
<rect x="774" y="475" width="1" height="13" fill="#c4102e"/>
<rect x="771" y="486" width="6" height="1" fill="#c4102e"/>
<rect x="781" y="485" width="1" height="1" fill="#056b14"/>
<rect x="781" y="489" width="1" height="1" fill="#056b14"/>
<rect x="778.5" y="486.5" width="5" height="2" fill="#008000" stroke="#056b14"/>
<rect x="788" y="489" width="1" height="1" fill="#056b14"/>
<rect x="788" y="494" width="1" height="3" fill="#056b14"/>
<rect x="785.5" y="490.5" width="5" height="3" fill="#008000" stroke="#056b14"/>
<rect x="795" y="490" width="1" height="6" fill="#c4102e"/>
<rect x="792" y="492" width="6" height="1" fill="#c4102e"/>
<rect x="802" y="491" width="1" height="4" fill="#056b14"/>
<rect x="799" y="493" width="6" height="1" fill="#056b14"/>
<rect x="809" y="471" width="1" height="5" fill="#c4102e"/>
<rect x="809" y="493" width="1" height="3" fill="#c4102e"/>
<rect x="806.5" y="476.5" width="5" height="16" fill="#fff" stroke="#c4102e"/>
<rect x="816" y="463" width="1" height="13" fill="#c4102e"/>
<rect x="816" y="482" width="1" height="2" fill="#c4102e"/>
<rect x="813.5" y="476.5" width="5" height="5" fill="#fff" stroke="#c4102e"/>
<rect x="823" y="481" width="1" height="3" fill="#056b14"/>
<rect x="820.5" y="478.5" width="5" height="2" fill="#008000" stroke="#056b14"/>
<rect x="830" y="474" width="1" height="10" fill="#056b14"/>
<rect x="827" y="481" width="6" height="1" fill="#056b14"/>
<rect x="837" y="478" width="1" height="13" fill="#c4102e"/>
<rect x="834" y="482" width="6" height="2" fill="#c4102e"/>
<rect x="844" y="480" width="1" height="2" fill="#056b14"/>
<rect x="841.5" y="482.5" width="5" height="9" fill="#008000" stroke="#056b14"/>
<rect x="851" y="490" width="1" height="7" fill="#056b14"/>
<rect x="848" y="490" width="6" height="1" fill="#056b14"/>
<rect x="858" y="487" width="1" height="6" fill="#c4102e"/>
<rect x="855" y="490" width="6" height="2" fill="#c4102e"/>
<rect x="865" y="476" width="1" height="7" fill="#c4102e"/>
<rect x="865" y="486" width="1" height="9" fill="#c4102e"/>
<rect x="862.5" y="483.5" width="5" height="2" fill="#fff" stroke="#c4102e"/>
<rect x="872" y="479" width="1" height="6" fill="#c4102e"/>
<rect x="869" y="482" width="6" height="1" fill="#c4102e"/>
<rect x="879" y="477" width="1" height="1" fill="#c4102e"/>
<rect x="879" y="483" width="1" height="1" fill="#c4102e"/>
<rect x="876.5" y="478.5" width="5" height="4" fill="#fff" stroke="#c4102e"/>
<rect x="886" y="470" width="1" height="4" fill="#c4102e"/>
<rect x="886" y="477" width="1" height="1" fill="#c4102e"/>
<rect x="883.5" y="474.5" width="5" height="2" fill="#fff" stroke="#c4102e"/>
<rect x="893" y="469" width="1" height="7" fill="#c4102e"/>
<rect x="890" y="474" width="6" height="2" fill="#c4102e"/>
<rect x="900" y="472" width="1" height="1" fill="#056b14"/>
<rect x="900" y="475" width="1" height="2" fill="#056b14"/>
<rect x="897.5" y="473.5" width="5" height="1" fill="#008000" stroke="#056b14"/>
<rect x="907" y="470" width="1" height="1" fill="#c4102e"/>
<rect x="907" y="475" width="1" height="5" fill="#c4102e"/>
<rect x="904.5" y="471.5" width="5" height="3" fill="#fff" stroke="#c4102e"/>
<rect x="914" y="478" width="1" height="3" fill="#056b14"/>
<rect x="911.5" y="471.5" width="5" height="6" fill="#008000" stroke="#056b14"/>
<rect x="921" y="487" width="1" height="2" fill="#056b14"/>
<rect x="918.5" y="478.5" width="5" height="8" fill="#008000" stroke="#056b14"/>
<rect x="928" y="485" width="1" height="4" fill="#056b14"/>
<rect x="925" y="487" width="6" height="1" fill="#056b14"/>
<rect x="935" y="473" width="1" height="2" fill="#c4102e"/>
<rect x="935" y="487" width="1" height="1" fill="#c4102e"/>
<rect x="932.5" y="475.5" width="5" height="11" fill="#fff" stroke="#c4102e"/>
<rect x="942" y="460" width="1" height="13" fill="#056b14"/>
<rect x="942" y="475" width="1" height="2" fill="#056b14"/>
<rect x="939.5" y="473.5" width="5" height="1" fill="#008000" stroke="#056b14"/>
<rect x="949" y="474" width="1" height="4" fill="#c4102e"/>
<rect x="946" y="476" width="6" height="1" fill="#c4102e"/>
<rect x="956" y="471" width="1" height="4" fill="#c4102e"/>
<rect x="953" y="473" width="6" height="1" fill="#c4102e"/>
<rect x="963" y="466" width="1" height="2" fill="#c4102e"/>
<rect x="963" y="473" width="1" height="1" fill="#c4102e"/>
<rect x="960.5" y="468.5" width="5" height="4" fill="#fff" stroke="#c4102e"/>
<rect x="970" y="465" width="1" height="2" fill="#056b14"/>
<rect x="967.5" y="467.5" width="5" height="4" fill="#008000" stroke="#056b14"/>
<rect x="977" y="464" width="1" height="4" fill="#c4102e"/>
<rect x="977" y="472" width="1" height="1" fill="#c4102e"/>
<rect x="974.5" y="468.5" width="5" height="3" fill="#fff" stroke="#c4102e"/>
<rect x="984" y="456" width="1" height="3" fill="#c4102e"/>
<rect x="984" y="468" width="1" height="2" fill="#c4102e"/>
<rect x="981.5" y="459.5" width="5" height="8" fill="#fff" stroke="#c4102e"/>
<rect x="991" y="461" width="1" height="2" fill="#056b14"/>
<rect x="988.5" y="458.5" width="5" height="2" fill="#008000" stroke="#056b14"/>
<rect x="998" y="460" width="1" height="2" fill="#056b14"/>
<rect x="998" y="465" width="1" height="1" fill="#056b14"/>
<rect x="995.5" y="462.5" width="5" height="2" fill="#008000" stroke="#056b14"/>
<rect x="1005" y="438" width="1" height="15" fill="#c4102e"/>
<rect x="1005" y="465" width="1" height="1" fill="#c4102e"/>
<rect x="1002.5" y="453.5" width="5" height="11" fill="#fff" stroke="#c4102e"/>
<rect x="1012" y="473" width="1" height="2" fill="#056b14"/>
<rect x="1009.5" y="453.5" width="5" height="19" fill="#008000" stroke="#056b14"/>
<rect x="1019" y="475" width="1" height="2" fill="#056b14"/>
<rect x="1016.5" y="472.5" width="5" height="2" fill="#008000" stroke="#056b14"/>
<rect x="1026" y="480" width="1" height="1" fill="#056b14"/>
<rect x="1023.5" y="476.5" width="5" height="3" fill="#008000" stroke="#056b14"/>
<rect x="1033" y="475" width="1" height="4" fill="#056b14"/>
<rect x="1030.5" y="479.5" width="5" height="8" fill="#008000" stroke="#056b14"/>
<rect x="1040" y="455" width="1" height="2" fill="#c4102e"/>
<rect x="1040" y="487" width="1" height="3" fill="#c4102e"/>
<rect x="1037.5" y="457.5" width="5" height="29" fill="#fff" stroke="#c4102e"/>
<rect x="1047" y="456" width="1" height="5" fill="#c4102e"/>
<rect x="1044.5" y="444.5" width="5" height="11" fill="#fff" stroke="#c4102e"/>
<rect x="1054" y="429" width="1" height="12" fill="#056b14"/>
<rect x="1054" y="450" width="1" height="1" fill="#056b14"/>
<rect x="1051.5" y="441.5" width="5" height="8" fill="#008000" stroke="#056b14"/>
<rect x="1061" y="469" width="1" height="1" fill="#056b14"/>
<rect x="1058.5" y="450.5" width="5" height="18" fill="#008000" stroke="#056b14"/>
<rect x="1068" y="475" width="1" height="2" fill="#056b14"/>
<rect x="1065.5" y="470.5" width="5" height="4" fill="#008000" stroke="#056b14"/>
<rect x="1075" y="470" width="1" height="1" fill="#c4102e"/>
<rect x="1075" y="475" width="1" height="3" fill="#c4102e"/>
<rect x="1072.5" y="471.5" width="5" height="3" fill="#fff" stroke="#c4102e"/>
<rect x="1082" y="465" width="1" height="6" fill="#056b14"/>
<rect x="1079" y="471" width="6" height="1" fill="#056b14"/>
<rect x="1089" y="471" width="1" height="5" fill="#056b14"/>
<rect x="1086" y="472" width="6" height="1" fill="#056b14"/>
<rect x="1093.5" y="473.5" width="5" height="4" fill="#008000" stroke="#056b14"/>
<rect x="1103" y="477" width="1" height="3" fill="#c4102e"/>
<rect x="1100.5" y="474.5" width="5" height="2" fill="#fff" stroke="#c4102e"/>
<rect x="1110" y="472" width="1" height="2" fill="#056b14"/>
<rect x="1110" y="479" width="1" height="2" fill="#056b14"/>
<rect x="1107.5" y="474.5" width="5" height="4" fill="#008000" stroke="#056b14"/>
<rect x="1117" y="479" width="1" height="2" fill="#056b14"/>
<rect x="1114" y="479" width="6" height="1" fill="#056b14"/>
<rect x="1124" y="475" width="1" height="6" fill="#c4102e"/>
<rect x="1121" y="477" width="6" height="2" fill="#c4102e"/>
<rect x="1131" y="463" width="1" height="12" fill="#c4102e"/>
<rect x="1128" y="466" width="6" height="2" fill="#c4102e"/>
<rect x="1138" y="446" width="1" height="1" fill="#c4102e"/>
<rect x="1138" y="456" width="1" height="6" fill="#c4102e"/>
<rect x="1135.5" y="447.5" width="5" height="8" fill="#fff" stroke="#c4102e"/>
<rect x="1145" y="458" width="1" height="1" fill="#056b14"/>
<rect x="1142.5" y="449.5" width="5" height="8" fill="#008000" stroke="#056b14"/>
<rect x="71.5" y="654.5" width="5" height="26" fill="#fff" stroke="#c4102e"/>
<rect x="78.5" y="662.5" width="5" height="18" fill="#008000" stroke="#056b14"/>
<rect x="85.5" y="661.5" width="5" height="19" fill="#fff" stroke="#c4102e"/>
<rect x="92.5" y="663.5" width="5" height="17" fill="#008000" stroke="#056b14"/>
<rect x="99.5" y="667.5" width="5" height="13" fill="#008000" stroke="#056b14"/>
<rect x="106.5" y="666.5" width="5" height="14" fill="#fff" stroke="#c4102e"/>
<rect x="113.5" y="669.5" width="5" height="11" fill="#008000" stroke="#056b14"/>
<rect x="120.5" y="666.5" width="5" height="14" fill="#008000" stroke="#056b14"/>
<rect x="127.5" y="678.5" width="5" height="2" fill="#fff" stroke="#c4102e"/>
<rect x="134.5" y="666.5" width="5" height="14" fill="#fff" stroke="#c4102e"/>
<rect x="141.5" y="668.5" width="5" height="12" fill="#008000" stroke="#056b14"/>
<rect x="148.5" y="667.5" width="5" height="13" fill="#008000" stroke="#056b14"/>
<rect x="155.5" y="659.5" width="5" height="21" fill="#008000" stroke="#056b14"/>
<rect x="162.5" y="666.5" width="5" height="14" fill="#fff" stroke="#c4102e"/>
<rect x="169.5" y="670.5" width="5" height="10" fill="#008000" stroke="#056b14"/>
<rect x="176.5" y="667.5" width="5" height="13" fill="#008000" stroke="#056b14"/>
<rect x="183.5" y="658.5" width="5" height="22" fill="#fff" stroke="#c4102e"/>
<rect x="190.5" y="665.5" width="5" height="15" fill="#008000" stroke="#056b14"/>
<rect x="197.5" y="670.5" width="5" height="10" fill="#008000" stroke="#056b14"/>
<rect x="204.5" y="667.5" width="5" height="13" fill="#008000" stroke="#056b14"/>
<rect x="211.5" y="668.5" width="5" height="12" fill="#008000" stroke="#056b14"/>
<rect x="218.5" y="662.5" width="5" height="18" fill="#008000" stroke="#056b14"/>
<rect x="225.5" y="644.5" width="5" height="36" fill="#fff" stroke="#c4102e"/>
<rect x="232.5" y="654.5" width="5" height="26" fill="#fff" stroke="#c4102e"/>
<rect x="239.5" y="657.5" width="5" height="23" fill="#008000" stroke="#056b14"/>
<rect x="246.5" y="661.5" width="5" height="19" fill="#008000" stroke="#056b14"/>
<rect x="253.5" y="673.5" width="5" height="7" fill="#008000" stroke="#056b14"/>
<rect x="260.5" y="673.5" width="5" height="7" fill="#fff" stroke="#c4102e"/>
<rect x="267.5" y="659.5" width="5" height="21" fill="#008000" stroke="#056b14"/>
<rect x="274.5" y="652.5" width="5" height="28" fill="#fff" stroke="#c4102e"/>
<rect x="281.5" y="650.5" width="5" height="30" fill="#008000" stroke="#056b14"/>
<rect x="288.5" y="661.5" width="5" height="19" fill="#008000" stroke="#056b14"/>
<rect x="295.5" y="663.5" width="5" height="17" fill="#008000" stroke="#056b14"/>
<rect x="302.5" y="667.5" width="5" height="13" fill="#fff" stroke="#c4102e"/>
<rect x="309.5" y="675.5" width="5" height="5" fill="#008000" stroke="#056b14"/>
<rect x="316.5" y="672.5" width="5" height="8" fill="#008000" stroke="#056b14"/>
<rect x="323.5" y="672.5" width="5" height="8" fill="#fff" stroke="#c4102e"/>
<rect x="330.5" y="674.5" width="5" height="6" fill="#008000" stroke="#056b14"/>
<rect x="337.5" y="678.5" width="5" height="2" fill="#008000" stroke="#056b14"/>
<rect x="344.5" y="677.5" width="5" height="3" fill="#fff" stroke="#c4102e"/>
<rect x="351.5" y="677.5" width="5" height="3" fill="#fff" stroke="#c4102e"/>
<rect x="358.5" y="675.5" width="5" height="5" fill="#008000" stroke="#056b14"/>
<rect x="365.5" y="674.5" width="5" height="6" fill="#008000" stroke="#056b14"/>
<rect x="372.5" y="675.5" width="5" height="5" fill="#008000" stroke="#056b14"/>
<rect x="379.5" y="676.5" width="5" height="4" fill="#008000" stroke="#056b14"/>
<rect x="386.5" y="676.5" width="5" height="4" fill="#fff" stroke="#c4102e"/>
<rect x="393.5" y="676.5" width="5" height="4" fill="#008000" stroke="#056b14"/>
<rect x="400.5" y="675.5" width="5" height="5" fill="#008000" stroke="#056b14"/>
<rect x="407.5" y="674.5" width="5" height="6" fill="#fff" stroke="#c4102e"/>
<rect x="414.5" y="666.5" width="5" height="14" fill="#fff" stroke="#c4102e"/>
<rect x="421.5" y="674.5" width="5" height="6" fill="#008000" stroke="#056b14"/>
<rect x="428.5" y="673.5" width="5" height="7" fill="#fff" stroke="#c4102e"/>
<rect x="435.5" y="671.5" width="5" height="9" fill="#fff" stroke="#c4102e"/>
<rect x="442.5" y="667.5" width="5" height="13" fill="#008000" stroke="#056b14"/>
<rect x="449.5" y="673.5" width="5" height="7" fill="#fff" stroke="#c4102e"/>
<rect x="456.5" y="670.5" width="5" height="10" fill="#fff" stroke="#c4102e"/>
<rect x="463.5" y="671.5" width="5" height="9" fill="#008000" stroke="#056b14"/>
<rect x="470.5" y="668.5" width="5" height="12" fill="#008000" stroke="#056b14"/>
<rect x="477.5" y="675.5" width="5" height="5" fill="#008000" stroke="#056b14"/>
<rect x="484.5" y="673.5" width="5" height="7" fill="#008000" stroke="#056b14"/>
<rect x="491" y="680" width="6" height="1" fill="#c4102e"/>
<rect x="498.5" y="674.5" width="5" height="6" fill="#008000" stroke="#056b14"/>
<rect x="505.5" y="673.5" width="5" height="7" fill="#008000" stroke="#056b14"/>
<rect x="512.5" y="671.5" width="5" height="9" fill="#fff" stroke="#c4102e"/>
<rect x="519.5" y="673.5" width="5" height="7" fill="#008000" stroke="#056b14"/>
<rect x="526.5" y="670.5" width="5" height="10" fill="#fff" stroke="#c4102e"/>
<rect x="533.5" y="674.5" width="5" height="6" fill="#fff" stroke="#c4102e"/>
<rect x="540.5" y="674.5" width="5" height="6" fill="#fff" stroke="#c4102e"/>
<rect x="547.5" y="672.5" width="5" height="8" fill="#fff" stroke="#c4102e"/>
<rect x="554.5" y="662.5" width="5" height="18" fill="#fff" stroke="#c4102e"/>
<rect x="561.5" y="666.5" width="5" height="14" fill="#008000" stroke="#056b14"/>
<rect x="568.5" y="635.5" width="5" height="45" fill="#fff" stroke="#c4102e"/>
<rect x="575.5" y="621.5" width="5" height="59" fill="#fff" stroke="#c4102e"/>
<rect x="582.5" y="644.5" width="5" height="36" fill="#fff" stroke="#c4102e"/>
<rect x="589.5" y="641.5" width="5" height="39" fill="#008000" stroke="#056b14"/>
<rect x="596.5" y="629.5" width="5" height="51" fill="#fff" stroke="#c4102e"/>
<rect x="603.5" y="648.5" width="5" height="32" fill="#008000" stroke="#056b14"/>
<rect x="610.5" y="636.5" width="5" height="44" fill="#fff" stroke="#c4102e"/>
<rect x="617.5" y="642.5" width="5" height="38" fill="#fff" stroke="#c4102e"/>
<rect x="624.5" y="602.5" width="5" height="78" fill="#008000" stroke="#056b14"/>
<rect x="631.5" y="649.5" width="5" height="31" fill="#008000" stroke="#056b14"/>
<rect x="638.5" y="658.5" width="5" height="22" fill="#008000" stroke="#056b14"/>
<rect x="645.5" y="659.5" width="5" height="21" fill="#fff" stroke="#c4102e"/>
<rect x="652.5" y="647.5" width="5" height="33" fill="#008000" stroke="#056b14"/>
<rect x="659.5" y="660.5" width="5" height="20" fill="#008000" stroke="#056b14"/>
<rect x="666.5" y="662.5" width="5" height="18" fill="#fff" stroke="#c4102e"/>
<rect x="673.5" y="647.5" width="5" height="33" fill="#008000" stroke="#056b14"/>
<rect x="680.5" y="667.5" width="5" height="13" fill="#008000" stroke="#056b14"/>
<rect x="687.5" y="665.5" width="5" height="15" fill="#008000" stroke="#056b14"/>
<rect x="694.5" y="676.5" width="5" height="4" fill="#008000" stroke="#056b14"/>
<rect x="701.5" y="645.5" width="5" height="35" fill="#fff" stroke="#c4102e"/>
<rect x="708.5" y="659.5" width="5" height="21" fill="#008000" stroke="#056b14"/>
<rect x="715.5" y="667.5" width="5" height="13" fill="#008000" stroke="#056b14"/>
<rect x="722.5" y="671.5" width="5" height="9" fill="#008000" stroke="#056b14"/>
<rect x="729.5" y="666.5" width="5" height="14" fill="#008000" stroke="#056b14"/>
<rect x="736.5" y="666.5" width="5" height="14" fill="#008000" stroke="#056b14"/>
<rect x="743.5" y="664.5" width="5" height="16" fill="#fff" stroke="#c4102e"/>
<rect x="750.5" y="667.5" width="5" height="13" fill="#fff" stroke="#c4102e"/>
<rect x="757.5" y="664.5" width="5" height="16" fill="#008000" stroke="#056b14"/>
<rect x="764.5" y="668.5" width="5" height="12" fill="#008000" stroke="#056b14"/>
<rect x="771.5" y="671.5" width="5" height="9" fill="#fff" stroke="#c4102e"/>
<rect x="778.5" y="673.5" width="5" height="7" fill="#008000" stroke="#056b14"/>
<rect x="785.5" y="670.5" width="5" height="10" fill="#008000" stroke="#056b14"/>
<rect x="792.5" y="675.5" width="5" height="5" fill="#fff" stroke="#c4102e"/>
<rect x="799.5" y="673.5" width="5" height="7" fill="#008000" stroke="#056b14"/>
<rect x="806.5" y="653.5" width="5" height="27" fill="#fff" stroke="#c4102e"/>
<rect x="813.5" y="622.5" width="5" height="58" fill="#fff" stroke="#c4102e"/>
<rect x="820.5" y="657.5" width="5" height="23" fill="#008000" stroke="#056b14"/>
<rect x="827.5" y="660.5" width="5" height="20" fill="#008000" stroke="#056b14"/>
<rect x="834.5" y="658.5" width="5" height="22" fill="#fff" stroke="#c4102e"/>
<rect x="841.5" y="666.5" width="5" height="14" fill="#008000" stroke="#056b14"/>
<rect x="848.5" y="668.5" width="5" height="12" fill="#008000" stroke="#056b14"/>
<rect x="855.5" y="671.5" width="5" height="9" fill="#fff" stroke="#c4102e"/>
<rect x="862.5" y="659.5" width="5" height="21" fill="#fff" stroke="#c4102e"/>
<rect x="869.5" y="655.5" width="5" height="25" fill="#fff" stroke="#c4102e"/>
<rect x="876.5" y="656.5" width="5" height="24" fill="#fff" stroke="#c4102e"/>
<rect x="883.5" y="653.5" width="5" height="27" fill="#fff" stroke="#c4102e"/>
<rect x="890.5" y="662.5" width="5" height="18" fill="#fff" stroke="#c4102e"/>
<rect x="897.5" y="667.5" width="5" height="13" fill="#008000" stroke="#056b14"/>
<rect x="904.5" y="666.5" width="5" height="14" fill="#fff" stroke="#c4102e"/>
<rect x="911.5" y="671.5" width="5" height="9" fill="#008000" stroke="#056b14"/>
<rect x="918.5" y="674.5" width="5" height="6" fill="#008000" stroke="#056b14"/>
<rect x="925.5" y="676.5" width="5" height="4" fill="#008000" stroke="#056b14"/>
<rect x="932.5" y="670.5" width="5" height="10" fill="#fff" stroke="#c4102e"/>
<rect x="939.5" y="642.5" width="5" height="38" fill="#008000" stroke="#056b14"/>
<rect x="946.5" y="670.5" width="5" height="10" fill="#fff" stroke="#c4102e"/>
<rect x="953.5" y="669.5" width="5" height="11" fill="#fff" stroke="#c4102e"/>
<rect x="960.5" y="668.5" width="5" height="12" fill="#fff" stroke="#c4102e"/>
<rect x="967.5" y="669.5" width="5" height="11" fill="#008000" stroke="#056b14"/>
<rect x="974.5" y="664.5" width="5" height="16" fill="#fff" stroke="#c4102e"/>
<rect x="981.5" y="663.5" width="5" height="17" fill="#fff" stroke="#c4102e"/>
<rect x="988.5" y="669.5" width="5" height="11" fill="#008000" stroke="#056b14"/>
<rect x="995.5" y="671.5" width="5" height="9" fill="#008000" stroke="#056b14"/>
<rect x="1002.5" y="637.5" width="5" height="43" fill="#fff" stroke="#c4102e"/>
<rect x="1009.5" y="639.5" width="5" height="41" fill="#008000" stroke="#056b14"/>
<rect x="1016.5" y="663.5" width="5" height="17" fill="#008000" stroke="#056b14"/>
<rect x="1023.5" y="663.5" width="5" height="17" fill="#008000" stroke="#056b14"/>
<rect x="1030.5" y="659.5" width="5" height="21" fill="#008000" stroke="#056b14"/>
<rect x="1037.5" y="632.5" width="5" height="48" fill="#fff" stroke="#c4102e"/>
<rect x="1044.5" y="656.5" width="5" height="24" fill="#fff" stroke="#c4102e"/>
<rect x="1051.5" y="605.5" width="5" height="75" fill="#008000" stroke="#056b14"/>
<rect x="1058.5" y="657.5" width="5" height="23" fill="#008000" stroke="#056b14"/>
<rect x="1065.5" y="658.5" width="5" height="22" fill="#008000" stroke="#056b14"/>
<rect x="1072.5" y="655.5" width="5" height="25" fill="#fff" stroke="#c4102e"/>
<rect x="1079.5" y="657.5" width="5" height="23" fill="#008000" stroke="#056b14"/>
<rect x="1086.5" y="666.5" width="5" height="14" fill="#008000" stroke="#056b14"/>
<rect x="1093.5" y="674.5" width="5" height="6" fill="#008000" stroke="#056b14"/>
<rect x="1100.5" y="668.5" width="5" height="12" fill="#fff" stroke="#c4102e"/>
<rect x="1107.5" y="662.5" width="5" height="18" fill="#008000" stroke="#056b14"/>
<rect x="1114.5" y="671.5" width="5" height="9" fill="#008000" stroke="#056b14"/>
<rect x="1121.5" y="667.5" width="5" height="13" fill="#fff" stroke="#c4102e"/>
<rect x="1128.5" y="626.5" width="5" height="54" fill="#fff" stroke="#c4102e"/>
<rect x="1135.5" y="630.5" width="5" height="50" fill="#fff" stroke="#c4102e"/>
<rect x="1142.5" y="673.5" width="5" height="7" fill="#008000" stroke="#056b14"/>
<path d="M1102.5 143V681" stroke="#000" stroke-dasharray="3 3" fill="none"/>
<path d="M1099 157.500h7" stroke="#000" fill="none"/><path d="M1100 158h5v1h-1v1h-1v1h-1v-1h-1v-1h-1z" fill="#000"/>
</g>
<polyline points="74.5,207.5 81.5,196.5 88.5,189.5 95.5,200.5 102.5,205.5 110.5,209.5 116.5,208.5 122.5,209.5 135.5,209.5 143.5,208.5 151.5,203.5 157.5,200.5 165.5,199.5 172.5,198.5 180.5,197.5 187.5,197.5 192.5,198.5 200.5,198.5 207.5,196.5 215.5,197.5 221.5,196.5 228.5,189.5 235.5,186.5 242.5,180.5 250.5,176.5 256.5,177.5 262.5,175.5 270.5,173.5 277.5,169.5 285.5,166.5 292.5,165.5 307.5,165.5 325.5,165.5 332.5,163.5 342.5,163.5 357.5,162.5 367.5,160.5 375.5,160.5 382.5,165.5 392.5,167.5 400.5,167.5 411.5,166.5 417.5,168.5 427.5,176.5 438.5,187.5 447.5,201.5 460.5,215.5 467.5,226.5 477.5,238.5 487.5,253.5 492.5,258.5 500.5,265.5 507.5,270.5 515.5,272.5 523.5,278.5 530.5,282.5 537.5,291.5 545.5,298.5 555.5,302.5 565.5,307.5 575.5,307.5 582.5,303.5 592.5,299.5 601.5,295.5 606.5,295.5 612.5,298.5 625.5,300.5 635.5,302.5 641.5,301.5 655.5,304.5 662.5,311.5 668.5,315.5 680.5,318.5 690.5,322.5 697.5,323.5 705.5,322.5 715.5,323.5 723.5,325.5 735.5,327.5 752.5,330.5 767.5,332.5 785.5,333.5 790.5,334.5 802.5,337.5 815.5,335.5 827.5,337.5 840.5,337.5 857.5,339.5 875.5,337.5 885.5,338.5 900.5,337.5 917.5,336.5 930.5,335.5 942.5,333.5 950.5,333.5 960.5,339.5 975.5,351.5 987.5,357.5 997.5,363.5 1005.5,364.5 1020.5,371.5 1032.5,375.5 1042.5,371.5 1055.5,367.5 1062.5,367.5 1070.5,369.5 1081.5,367.5 1092.5,370.5 1102.5,371.5 1115.5,370.5 1125.5,370.5 1135.5,367.5 1143.5,365.5 1150.5,366.5 1160.5,369.5 1175.5,371.5 1187.5,371.5 1200.5,378.5 1217.5,382.5 1240.5,386.5 1255.5,390.5 1270.5,391.5 1295.5,396.5 1315.5,398.5 1326.5,404.5 1340.5,405.5 1355.5,407.5" fill="none" stroke="#b82030" stroke-width="1" stroke-linejoin="round" shape-rendering="crispEdges"/>
<polyline points="74.5,308.5 81.5,300.5 88.5,295.5 95.5,301.5 101.5,304.5 110.5,306.5 122.5,306.5 135.5,305.5 140.5,306.5 145.5,305.5 151.5,302.5 157.5,300.5 172.5,299.5 185.5,298.5 192.5,299.5 207.5,299.5 221.5,299.5 228.5,295.5 235.5,294.5 242.5,291.5 250.5,289.5 267.5,288.5 277.5,284.5 287.5,282.5 310.5,282.5 325.5,281.5 337.5,279.5 355.5,279.5 367.5,277.5 376.5,277.5 382.5,280.5 392.5,280.5 400.5,281.5 411.5,280.5 417.5,281.5 427.5,286.5 438.5,292.5 443.5,297.5 456.5,306.5 465.5,316.5 475.5,325.5 485.5,333.5 492.5,340.5 505.5,347.5 515.5,350.5 527.5,357.5 537.5,363.5 550.5,370.5 562.5,373.5 572.5,375.5 582.5,373.5 595.5,370.5 605.5,368.5 615.5,370.5 630.5,371.5 640.5,372.5 655.5,375.5 670.5,382.5 680.5,383.5 695.5,388.5 710.5,389.5 735.5,392.5 760.5,396.5 785.5,398.5 790.5,398.5 802.5,401.5 815.5,400.5 825.5,399.5 840.5,402.5 857.5,403.5 875.5,403.5 890.5,403.5 905.5,402.5 920.5,402.5 930.5,402.5 942.5,400.5 950.5,400.5 960.5,403.5 975.5,410.5 987.5,413.5 997.5,418.5 1007.5,419.5 1025.5,424.5 1035.5,424.5 1045.5,422.5 1055.5,420.5 1070.5,420.5 1081.5,419.5 1090.5,421.5 1102.5,421.5 1125.5,421.5 1140.5,418.5 1155.5,419.5 1180.5,419.5 1187.5,418.5 1200.5,422.5 1220.5,424.5 1245.5,426.5 1270.5,427.5 1295.5,429.5 1315.5,430.5 1326.5,432.5 1345.5,433.5 1355.5,433.5" fill="none" stroke="#1818a0" stroke-width="1" stroke-linejoin="round" shape-rendering="crispEdges"/>
<polyline points="74.5,422.5 84.5,418.5 99.5,415.5 128.5,414.5 150.5,412.5 183.5,411.5 203.5,412.5 218.5,414.5 248.5,415.5 273.5,415.5 291.5,413.5 308.5,412.5 326.5,410.5 344.5,409.5 365.5,408.5 390.5,408.5 427.5,408.5 440.5,411.5 450.5,414.5 464.5,420.5 482.5,428.5 503.5,434.5 524.5,441.5 542.5,446.5 556.5,449.5 570.5,451.5 590.5,452.5 610.5,452.5 635.5,453.5 660.5,455.5 685.5,458.5 710.5,462.5 735.5,465.5 760.5,468.5 785.5,470.5 800.5,472.5 815.5,473.5 840.5,475.5 865.5,475.5 890.5,475.5 915.5,475.5 940.5,475.5 965.5,476.5 990.5,478.5 1015.5,480.5 1040.5,480.5 1045.5,480.5 1070.5,479.5 1095.5,478.5 1120.5,477.5 1145.5,475.5 1170.5,473.5 1195.5,471.5 1220.5,469.5 1245.5,467.5 1270.5,466.5 1295.5,465.5 1320.5,464.5 1345.5,463.5 1355.5,462.5" fill="none" stroke="#000" stroke-width="1" stroke-linejoin="round" shape-rendering="crispEdges"/>
<polyline points="74.5,571.5 81.5,575.5 88.5,576.5 95.5,565.5 102.5,561.5 110.5,559.5 122.5,557.5 135.5,556.5 145.5,556.5 157.5,561.5 175.5,561.5 185.5,562.5 195.5,561.5 207.5,564.5 217.5,565.5 228.5,572.5 235.5,574.5 242.5,579.5 250.5,582.5 262.5,585.5 270.5,584.5 282.5,587.5 295.5,587.5 310.5,585.5 325.5,582.5 335.5,583.5 342.5,583.5 355.5,581.5 362.5,581.5 370.5,582.5 376.5,581.5 382.5,578.5 392.5,576.5 400.5,576.5 412.5,576.5 422.5,573.5 435.5,568.5 445.5,562.5 455.5,560.5 467.5,556.5 477.5,555.5 487.5,551.5 507.5,551.5 515.5,553.5 527.5,554.5 535.5,552.5 542.5,549.5 550.5,549.5 557.5,550.5 565.5,549.5 575.5,552.5 585.5,556.5 595.5,558.5 605.5,560.5 615.5,558.5 632.5,557.5 642.5,558.5 647.5,557.5 655.5,558.5 662.5,555.5 670.5,553.5 682.5,556.5 692.5,556.5 707.5,560.5 720.5,560.5 735.5,562.5 755.5,563.5 780.5,566.5 802.5,566.5 810.5,568.5 830.5,568.5 850.5,570.5 865.5,572.5 870.5,571.5 880.5,572.5 895.5,571.5 917.5,571.5 932.5,573.5 940.5,574.5 950.5,574.5 960.5,570.5 972.5,565.5 987.5,562.5 997.5,558.5 1005.5,559.5 1020.5,555.5 1032.5,553.5 1040.5,556.5 1052.5,557.5 1065.5,557.5 1082.5,555.5 1095.5,552.5 1112.5,552.5 1130.5,551.5 1140.5,553.5 1150.5,550.5 1165.5,547.5 1185.5,543.5 1200.5,537.5 1220.5,532.5 1230.5,528.5 1240.5,527.5 1250.5,522.5 1270.5,519.5 1290.5,516.5 1305.5,512.5 1317.5,509.5 1327.5,505.5 1342.5,503.5 1355.5,501.5" fill="none" stroke="#1818a0" stroke-width="1" stroke-linejoin="round" shape-rendering="crispEdges"/>
<polyline points="1193.5,602.5 1202.5,595.5 1210.5,593.5 1225.5,586.5 1237.5,581.5 1242.5,580.5 1252.5,573.5 1262.5,571.5 1272.5,567.5 1282.5,564.5 1292.5,561.5 1302.5,557.5 1312.5,553.5 1320.5,550.5 1327.5,544.5 1340.5,542.5 1355.5,537.5" fill="none" stroke="#b82030" stroke-width="1" stroke-linejoin="round" shape-rendering="crispEdges"/>
<polyline points="81.5,273.5 86.5,273.5 100.5,278.5" fill="none" stroke="#2828c8" stroke-width="1" stroke-linejoin="round" shape-rendering="crispEdges"/>
<polyline points="690.5,501.5 709.5,497.5" fill="none" stroke="#2828c8" stroke-width="1" stroke-linejoin="round" shape-rendering="crispEdges"/>
</svg>
<div class="b" style="left:0px;top:681px;width:1360px;height:2px;background:#808080;"></div>
<div class="b" style="left:0px;top:683px;width:1360px;height:45px;background:#f0f0f0;"></div>
<div class="b" style="left:0px;top:685px;width:1360px;height:1px;background:#a0a0a0;"></div>
<div class="b" style="left:0px;top:686px;width:1px;height:19px;background:#a0a0a0;"></div>
<div class="b" style="left:0px;top:704px;width:1360px;height:1px;background:#fff;"></div>
<div class="b" style="left:0px;top:705px;width:1360px;height:1px;background:#a0a0a0;"></div>
<div class="b" style="left:0px;top:665px;width:22px;height:13px;background:#f0f0f0;border:1px solid;border-color:#fff #696969 #696969 #fff;box-shadow:inset -1px -1px 0 #a0a0a0"></div>
<svg style="left:8px;top:667px" width="10" height="10" viewBox="0 0 10 10" shape-rendering="crispEdges"><path d="M5 2L1.500 8.500h7z" fill="none" stroke="#404040" shape-rendering="geometricPrecision"/></svg>
<div class="b" style="left:1336px;top:665px;width:20px;height:13px;background:#f0f0f0;border:1px solid;border-color:#fff #696969 #696969 #fff;box-shadow:inset -1px -1px 0 #a0a0a0"></div>
<svg style="left:1343px;top:669px" width="12" height="8" viewBox="0 0 12 8" shape-rendering="crispEdges"><path d="M0 4.500h10M7 1.500l3 3-3 3" fill="none" stroke="#404040" shape-rendering="geometricPrecision"/></svg>
<svg style="left:4px;top:688px" width="17" height="14" viewBox="0 0 17 14" shape-rendering="crispEdges"><rect x="0.5" y="0.5" width="15" height="13" fill="#fff" stroke="#101050"/><rect x="1" y="1" width="14" height="2" fill="#2030c0"/><path d="M1 4.5h14" stroke="#101050"/><path d="M1 6.5h14" stroke="#101050"/><path d="M1 8.5h14" stroke="#101050"/><path d="M1 10.5h14" stroke="#101050"/><path d="M3.5 3v9" stroke="#fff"/><path d="M6.5 3v9" stroke="#fff"/><path d="M9.5 3v9" stroke="#fff"/><path d="M12.5 3v9" stroke="#fff"/></svg>
<svg style="left:22px;top:686.5px" width="16" height="16" viewBox="0 0 16 16" shape-rendering="crispEdges"><g shape-rendering="geometricPrecision"><circle cx="8" cy="8" r="8" fill="#f01010"/><text x="8" y="12" font-family="'Liberation Sans','Noto Sans CJK SC',sans-serif" font-size="11" font-weight="700" fill="#ffe000" text-anchor="middle">沪</text></g></svg>
<div class="t" style="left:42.5px;top:686.5px;font:400 11.4px/17px 'DejaVu Sans','Liberation Sans','Noto Sans CJK SC',sans-serif;color:#0a8a1a;">3268.83 ▼-19.25 -0.59% 3930.57</div>
<div class="t" style="left:234.5px;top:686.0px;font:400 12px/18px 'Liberation Sans','Noto Sans CJK SC',sans-serif;color:#500000;">亿</div>
<svg style="left:253px;top:686.5px" width="16" height="16" viewBox="0 0 16 16" shape-rendering="crispEdges"><g shape-rendering="geometricPrecision"><circle cx="8" cy="8" r="8" fill="#f01010"/><text x="8" y="12" font-family="'Liberation Sans','Noto Sans CJK SC',sans-serif" font-size="11" font-weight="700" fill="#ffe000" text-anchor="middle">深</text></g></svg>
<div class="b" style="left:274px;top:686.500px;width:196px;height:17px;overflow:hidden"><div class="t" style="left:0;top:0;font:400 11.4px/17px 'DejaVu Sans','Liberation Sans','Noto Sans CJK SC',sans-serif;color:#0a8a1a">11145.03 ▼-93.03 -0.83% 4970.20</div></div>
<div class="b" style="left:470px;top:686px;width:718px;height:17px;background:#f0f0f0;"></div>
<div class="b" style="left:470px;top:686px;width:1px;height:17px;background:#606060;"></div>
<div class="b" style="left:505px;top:686px;width:643px;height:17px;background:#cdcdcd;"></div>
<svg style="left:488px;top:689px" width="10" height="12" viewBox="0 0 10 12" shape-rendering="crispEdges"><path d="M7 1.500L2.500 6 7 10.500" fill="none" stroke="#505050" stroke-width="2" shape-rendering="geometricPrecision"/></svg>
<svg style="left:1164px;top:689px" width="10" height="12" viewBox="0 0 10 12" shape-rendering="crispEdges"><path d="M3 1.500L7.500 6 3 10.500" fill="none" stroke="#505050" stroke-width="2" shape-rendering="geometricPrecision"/></svg>
<svg style="left:1210px;top:686px" width="14" height="17" viewBox="0 0 14 17" shape-rendering="crispEdges"><g shape-rendering="geometricPrecision" fill="none"><path d="M7 5v7M4 16l3-9 3 9z" stroke="#2030a0" stroke-width="1.300"/><path d="M2.500 16.500h9" stroke="#2030a0" stroke-width="1.500"/><circle cx="7" cy="4" r="1.300" fill="#e01020"/><path d="M4 1.500a4 4 0 0 0 0 5M10 1.500a4 4 0 0 1 0 5M2 0a6 6 0 0 0 0 8M12 0a6 6 0 0 1 0 8" stroke="#e01020" stroke-width=".9"/></g></svg>
<div class="t" style="left:1229px;top:686.0px;font:400 12px/18px 'Liberation Sans','Noto Sans CJK SC',sans-serif;color:#000;letter-spacing:0.9px;">收002949分笔</div>
<div class="b" style="left:5px;top:710px;width:1px;height:15px;background:#fff;"></div>
<div class="b" style="left:6px;top:710px;width:1px;height:15px;background:#a0a0a0;"></div>
<div class="b" style="left:11px;top:709px;width:1342px;height:18px;border:1px solid;border-color:#a0a0a0 #fff #fff #a0a0a0;box-sizing:border-box"></div>
<div class="t" style="left:13px;top:708.5px;font:400 12px/18px 'Liberation Sans','Noto Sans CJK SC',sans-serif;color:#000;letter-spacing:0.2px;">[五月十三] 时间:20230630 开:13.8000 高:14.2600 低:13.4400 收:14.2200 手:97904 额:136744304.00 换:0.00 涨:3.04 盘:0 标:37.9262</div>
<div class="b" style="left:0px;top:728px;width:1360px;height:8px;background:#242d2c;background:linear-gradient(90deg,#262e2d 0%,#232d2f 60%,#1c2a38 100%)"></div>
<div class="b" style="left:1355px;top:728px;width:5px;height:8px;background:#3a4548;"></div>
<div class="t" style="left:1256px;top:728.5px;font:400 12px/18px 'Liberation Sans','Noto Sans CJK SC',sans-serif;color:#fff;">16:45</div>
</body></html>
